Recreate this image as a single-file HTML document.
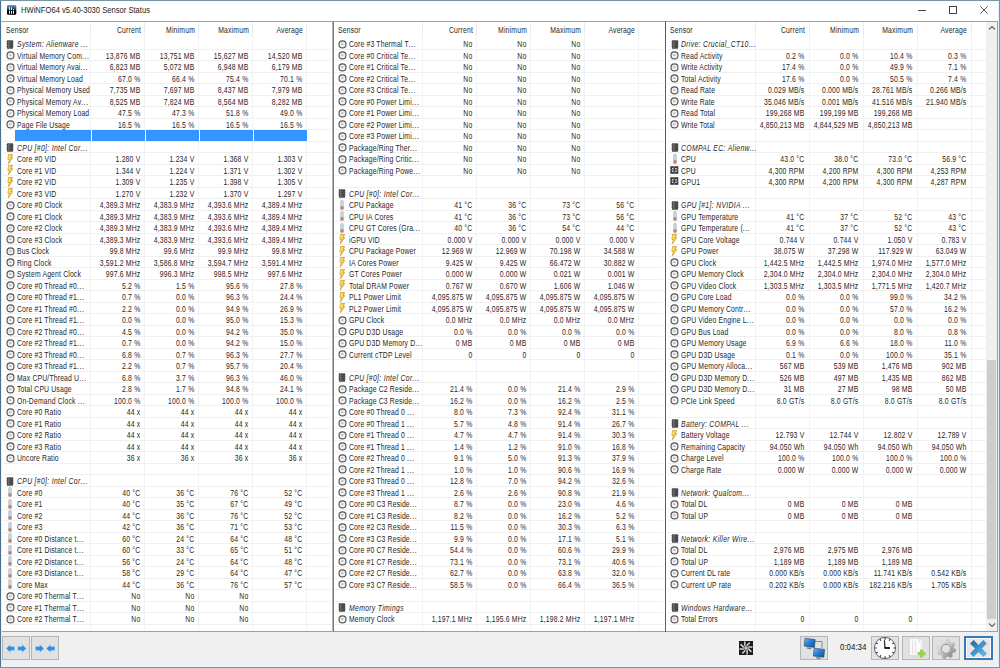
<!DOCTYPE html>
<html><head><meta charset="utf-8"><style>
*{margin:0;padding:0;box-sizing:border-box}
html,body{width:1000px;height:668px;overflow:hidden;background:#fff}
body{position:relative;font-family:"Liberation Sans",sans-serif}
.t{position:absolute;font-size:8.4px;letter-spacing:0.22px;line-height:9px;white-space:nowrap;color:#262626;transform:scaleX(0.815);transform-origin:0 0}
.r{display:flex;justify-content:flex-end;transform-origin:100% 0}
.nm{letter-spacing:0.2px}
.el{letter-spacing:0.75px}
.it{font-style:italic;letter-spacing:0.4px}
.ic{position:absolute;display:block}
.vg{position:absolute;top:37px;height:594px;width:1px;background:#f3f3f3}
.vh{position:absolute;top:22px;height:15px;width:1px;background:#ececec}
.hg{position:absolute;height:1px;background:#f0f0f0}
.sel{position:absolute;height:10.6px;background:#3396ff}
</style></head>
<body>
<div style="position:absolute;left:0;top:0;width:1000px;height:21px;background:#fff"></div>
<svg style="position:absolute;left:7px;top:5px" width="10" height="10" viewBox="0 0 10 10"><defs><linearGradient id="tg" x1="0" y1="0" x2="0" y2="1"><stop offset="0" stop-color="#6aa6c4"/><stop offset="0.5" stop-color="#0d3048"/><stop offset="0.62" stop-color="#000"/><stop offset="1" stop-color="#000"/></linearGradient></defs><rect x="-0.3" y="0.1" width="9.6" height="9.6" rx="1.3" fill="url(#tg)"/><rect x="2" y="2" width="1" height="3" fill="#c8f4ff"/><rect x="4" y="2.5" width="1" height="2.5" fill="#c8f4ff"/><rect x="6" y="4" width="1" height="1" fill="#b0ecff"/><rect x="2" y="5.8" width="1" height="2.8" fill="#fff"/><rect x="4" y="5.8" width="1" height="2.8" fill="#fff"/><rect x="6" y="5.8" width="1" height="2.8" fill="#fff"/></svg>
<div class="t" style="left:20.7px;top:5px;font-size:8.8px;letter-spacing:0;line-height:11px;color:#222;transform:scaleX(0.865);transform-origin:0 0">HWiNFO64 v5.40-3030 Sensor Status</div>
<div style="position:absolute;left:918px;top:10px;width:8px;height:1px;background:#444"></div>
<div style="position:absolute;left:949px;top:6px;width:7.5px;height:7.5px;border:1px solid #444"></div>
<svg style="position:absolute;left:980px;top:6px" width="8" height="8" viewBox="0 0 8 8"><path d="M0.3 0.3L7.7 7.7M7.7 0.3L0.3 7.7" stroke="#444" stroke-width="0.9"/></svg>
<div class="vg" style="left:90.30px"></div>
<div class="vh" style="left:90.30px"></div>
<div class="vg" style="left:144.30px"></div>
<div class="vh" style="left:144.30px"></div>
<div class="vg" style="left:198.30px"></div>
<div class="vh" style="left:198.30px"></div>
<div class="vg" style="left:252.30px"></div>
<div class="vh" style="left:252.30px"></div>
<div class="vg" style="left:306.30px"></div>
<div class="vh" style="left:306.30px"></div>
<div class="t hd" style="left:5.50px;top:26.2px">Sensor</div>
<div class="t hd r" style="left:90.80px;width:50.00px;top:26.2px">Current</div>
<div class="t hd r" style="left:144.80px;width:50.00px;top:26.2px">Minimum</div>
<div class="t hd r" style="left:198.80px;width:50.00px;top:26.2px">Maximum</div>
<div class="t hd r" style="left:252.80px;width:50.00px;top:26.2px">Average</div>
<div class="hg" style="left:3.00px;width:328px;top:49px"></div>
<svg class="ic" style="left:6.00px;top:39.50px" width="8" height="9" viewBox="0 0 8 9"><rect x="1" y="0.3" width="6" height="8.4" fill="#4a4a4a"/><rect x="2" y="0.3" width="1.5" height="8.4" fill="#6a6a6a"/><path d="M0.2 1.5h1M0.2 3.2h1M0.2 4.9h1M0.2 6.6h1M6.8 1.5h1M6.8 3.2h1M6.8 4.9h1M6.8 6.6h1" stroke="#777" stroke-width="0.7"/></svg>
<div class="t nm it" style="left:16.50px;top:40.30px">System: Alienware <span class="el">...</span></div>
<div class="hg" style="left:3.00px;width:328px;top:60px"></div>
<svg class="ic" style="left:5.60px;top:51.20px" width="9" height="9" viewBox="0 0 9 9"><circle cx="4.5" cy="4.4" r="3.5" fill="#f0f0f0" stroke="#555" stroke-width="1.15"/><path d="M3.2 4.1h2.2" stroke="#8a8a8a" stroke-width="0.9"/></svg>
<div class="t nm" style="left:16.50px;top:51.80px">Virtual Memory Com<span class="el">...</span></div>
<div class="t r" style="left:90.80px;width:49.40px;top:51.80px">13,876 MB</div>
<div class="t r" style="left:144.80px;width:49.40px;top:51.80px">13,751 MB</div>
<div class="t r" style="left:198.80px;width:49.40px;top:51.80px">15,627 MB</div>
<div class="t r" style="left:252.80px;width:49.40px;top:51.80px">14,520 MB</div>
<div class="hg" style="left:3.00px;width:328px;top:72px"></div>
<svg class="ic" style="left:5.60px;top:62.70px" width="9" height="9" viewBox="0 0 9 9"><circle cx="4.5" cy="4.4" r="3.5" fill="#f0f0f0" stroke="#555" stroke-width="1.15"/><path d="M3.2 4.1h2.2" stroke="#8a8a8a" stroke-width="0.9"/></svg>
<div class="t nm" style="left:16.50px;top:63.30px">Virtual Memory Avai<span class="el">...</span></div>
<div class="t r" style="left:90.80px;width:49.40px;top:63.30px">6,823 MB</div>
<div class="t r" style="left:144.80px;width:49.40px;top:63.30px">5,072 MB</div>
<div class="t r" style="left:198.80px;width:49.40px;top:63.30px">6,948 MB</div>
<div class="t r" style="left:252.80px;width:49.40px;top:63.30px">6,179 MB</div>
<div class="hg" style="left:3.00px;width:328px;top:83px"></div>
<svg class="ic" style="left:5.60px;top:74.20px" width="9" height="9" viewBox="0 0 9 9"><circle cx="4.5" cy="4.4" r="3.5" fill="#f0f0f0" stroke="#555" stroke-width="1.15"/><path d="M3.2 4.1h2.2" stroke="#8a8a8a" stroke-width="0.9"/></svg>
<div class="t nm" style="left:16.50px;top:74.80px">Virtual Memory Load</div>
<div class="t r" style="left:90.80px;width:49.40px;top:74.80px">67.0 %</div>
<div class="t r" style="left:144.80px;width:49.40px;top:74.80px">66.4 %</div>
<div class="t r" style="left:198.80px;width:49.40px;top:74.80px">75.4 %</div>
<div class="t r" style="left:252.80px;width:49.40px;top:74.80px">70.1 %</div>
<div class="hg" style="left:3.00px;width:328px;top:95px"></div>
<svg class="ic" style="left:5.60px;top:85.70px" width="9" height="9" viewBox="0 0 9 9"><circle cx="4.5" cy="4.4" r="3.5" fill="#f0f0f0" stroke="#555" stroke-width="1.15"/><path d="M3.2 4.1h2.2" stroke="#8a8a8a" stroke-width="0.9"/></svg>
<div class="t nm" style="left:16.50px;top:86.30px">Physical Memory Used</div>
<div class="t r" style="left:90.80px;width:49.40px;top:86.30px">7,735 MB</div>
<div class="t r" style="left:144.80px;width:49.40px;top:86.30px">7,697 MB</div>
<div class="t r" style="left:198.80px;width:49.40px;top:86.30px">8,437 MB</div>
<div class="t r" style="left:252.80px;width:49.40px;top:86.30px">7,979 MB</div>
<div class="hg" style="left:3.00px;width:328px;top:106px"></div>
<svg class="ic" style="left:5.60px;top:97.20px" width="9" height="9" viewBox="0 0 9 9"><circle cx="4.5" cy="4.4" r="3.5" fill="#f0f0f0" stroke="#555" stroke-width="1.15"/><path d="M3.2 4.1h2.2" stroke="#8a8a8a" stroke-width="0.9"/></svg>
<div class="t nm" style="left:16.50px;top:97.80px">Physical Memory Av<span class="el">...</span></div>
<div class="t r" style="left:90.80px;width:49.40px;top:97.80px">8,525 MB</div>
<div class="t r" style="left:144.80px;width:49.40px;top:97.80px">7,824 MB</div>
<div class="t r" style="left:198.80px;width:49.40px;top:97.80px">8,564 MB</div>
<div class="t r" style="left:252.80px;width:49.40px;top:97.80px">8,282 MB</div>
<div class="hg" style="left:3.00px;width:328px;top:118px"></div>
<svg class="ic" style="left:5.60px;top:108.70px" width="9" height="9" viewBox="0 0 9 9"><circle cx="4.5" cy="4.4" r="3.5" fill="#f0f0f0" stroke="#555" stroke-width="1.15"/><path d="M3.2 4.1h2.2" stroke="#8a8a8a" stroke-width="0.9"/></svg>
<div class="t nm" style="left:16.50px;top:109.30px">Physical Memory Load</div>
<div class="t r" style="left:90.80px;width:49.40px;top:109.30px">47.5 %</div>
<div class="t r" style="left:144.80px;width:49.40px;top:109.30px">47.3 %</div>
<div class="t r" style="left:198.80px;width:49.40px;top:109.30px">51.8 %</div>
<div class="t r" style="left:252.80px;width:49.40px;top:109.30px">49.0 %</div>
<div class="hg" style="left:3.00px;width:328px;top:129px"></div>
<svg class="ic" style="left:5.60px;top:120.20px" width="9" height="9" viewBox="0 0 9 9"><circle cx="4.5" cy="4.4" r="3.5" fill="#f0f0f0" stroke="#555" stroke-width="1.15"/><path d="M3.2 4.1h2.2" stroke="#8a8a8a" stroke-width="0.9"/></svg>
<div class="t nm" style="left:16.50px;top:120.80px">Page File Usage</div>
<div class="t r" style="left:90.80px;width:49.40px;top:120.80px">16.5 %</div>
<div class="t r" style="left:144.80px;width:49.40px;top:120.80px">16.5 %</div>
<div class="t r" style="left:198.80px;width:49.40px;top:120.80px">16.5 %</div>
<div class="t r" style="left:252.80px;width:49.40px;top:120.80px">16.5 %</div>
<div class="hg" style="left:3.00px;width:328px;top:141px"></div>
<div class="sel" style="left:15.40px;width:75.40px;top:130.20px"></div>
<div class="sel" style="left:91.80px;width:53.00px;top:130.20px"></div>
<div class="sel" style="left:145.80px;width:53.00px;top:130.20px"></div>
<div class="sel" style="left:199.80px;width:53.00px;top:130.20px"></div>
<div class="sel" style="left:253.80px;width:53.00px;top:130.20px"></div>
<div class="hg" style="left:3.00px;width:328px;top:152px"></div>
<svg class="ic" style="left:6.00px;top:143.00px" width="8" height="9" viewBox="0 0 8 9"><rect x="1" y="0.3" width="6" height="8.4" fill="#4a4a4a"/><rect x="2" y="0.3" width="1.5" height="8.4" fill="#6a6a6a"/><path d="M0.2 1.5h1M0.2 3.2h1M0.2 4.9h1M0.2 6.6h1M6.8 1.5h1M6.8 3.2h1M6.8 4.9h1M6.8 6.6h1" stroke="#777" stroke-width="0.7"/></svg>
<div class="t nm it" style="left:16.50px;top:143.80px">CPU [#0]: Intel Cor<span class="el">...</span></div>
<div class="hg" style="left:3.00px;width:328px;top:164px"></div>
<svg class="ic" style="left:6.50px;top:153.70px" width="7" height="10" viewBox="0 0 7 10"><path d="M1.6 0.4H5.6L4.1 3.6H5.7L1.4 9.7L2.5 5.3H0.9Z" fill="#f6d84a" stroke="#c98a1e" stroke-width="0.7" stroke-linejoin="round"/><path d="M2.3 1.2L1.8 4.6" stroke="#fff6b0" stroke-width="0.6"/></svg>
<div class="t nm" style="left:16.50px;top:155.30px">Core #0 VID</div>
<div class="t r" style="left:90.80px;width:49.40px;top:155.30px">1.280 V</div>
<div class="t r" style="left:144.80px;width:49.40px;top:155.30px">1.234 V</div>
<div class="t r" style="left:198.80px;width:49.40px;top:155.30px">1.368 V</div>
<div class="t r" style="left:252.80px;width:49.40px;top:155.30px">1.303 V</div>
<div class="hg" style="left:3.00px;width:328px;top:175px"></div>
<svg class="ic" style="left:6.50px;top:165.20px" width="7" height="10" viewBox="0 0 7 10"><path d="M1.6 0.4H5.6L4.1 3.6H5.7L1.4 9.7L2.5 5.3H0.9Z" fill="#f6d84a" stroke="#c98a1e" stroke-width="0.7" stroke-linejoin="round"/><path d="M2.3 1.2L1.8 4.6" stroke="#fff6b0" stroke-width="0.6"/></svg>
<div class="t nm" style="left:16.50px;top:166.80px">Core #1 VID</div>
<div class="t r" style="left:90.80px;width:49.40px;top:166.80px">1.344 V</div>
<div class="t r" style="left:144.80px;width:49.40px;top:166.80px">1.224 V</div>
<div class="t r" style="left:198.80px;width:49.40px;top:166.80px">1.371 V</div>
<div class="t r" style="left:252.80px;width:49.40px;top:166.80px">1.302 V</div>
<div class="hg" style="left:3.00px;width:328px;top:187px"></div>
<svg class="ic" style="left:6.50px;top:176.70px" width="7" height="10" viewBox="0 0 7 10"><path d="M1.6 0.4H5.6L4.1 3.6H5.7L1.4 9.7L2.5 5.3H0.9Z" fill="#f6d84a" stroke="#c98a1e" stroke-width="0.7" stroke-linejoin="round"/><path d="M2.3 1.2L1.8 4.6" stroke="#fff6b0" stroke-width="0.6"/></svg>
<div class="t nm" style="left:16.50px;top:178.30px">Core #2 VID</div>
<div class="t r" style="left:90.80px;width:49.40px;top:178.30px">1.309 V</div>
<div class="t r" style="left:144.80px;width:49.40px;top:178.30px">1.235 V</div>
<div class="t r" style="left:198.80px;width:49.40px;top:178.30px">1.398 V</div>
<div class="t r" style="left:252.80px;width:49.40px;top:178.30px">1.305 V</div>
<div class="hg" style="left:3.00px;width:328px;top:198px"></div>
<svg class="ic" style="left:6.50px;top:188.20px" width="7" height="10" viewBox="0 0 7 10"><path d="M1.6 0.4H5.6L4.1 3.6H5.7L1.4 9.7L2.5 5.3H0.9Z" fill="#f6d84a" stroke="#c98a1e" stroke-width="0.7" stroke-linejoin="round"/><path d="M2.3 1.2L1.8 4.6" stroke="#fff6b0" stroke-width="0.6"/></svg>
<div class="t nm" style="left:16.50px;top:189.80px">Core #3 VID</div>
<div class="t r" style="left:90.80px;width:49.40px;top:189.80px">1.270 V</div>
<div class="t r" style="left:144.80px;width:49.40px;top:189.80px">1.232 V</div>
<div class="t r" style="left:198.80px;width:49.40px;top:189.80px">1.370 V</div>
<div class="t r" style="left:252.80px;width:49.40px;top:189.80px">1.297 V</div>
<div class="hg" style="left:3.00px;width:328px;top:210px"></div>
<svg class="ic" style="left:5.60px;top:200.70px" width="9" height="9" viewBox="0 0 9 9"><circle cx="4.5" cy="4.4" r="3.5" fill="#f0f0f0" stroke="#555" stroke-width="1.15"/><path d="M3.2 4.1h2.2" stroke="#8a8a8a" stroke-width="0.9"/></svg>
<div class="t nm" style="left:16.50px;top:201.30px">Core #0 Clock</div>
<div class="t r" style="left:90.80px;width:49.40px;top:201.30px">4,389.3 MHz</div>
<div class="t r" style="left:144.80px;width:49.40px;top:201.30px">4,383.9 MHz</div>
<div class="t r" style="left:198.80px;width:49.40px;top:201.30px">4,393.6 MHz</div>
<div class="t r" style="left:252.80px;width:49.40px;top:201.30px">4,389.4 MHz</div>
<div class="hg" style="left:3.00px;width:328px;top:221px"></div>
<svg class="ic" style="left:5.60px;top:212.20px" width="9" height="9" viewBox="0 0 9 9"><circle cx="4.5" cy="4.4" r="3.5" fill="#f0f0f0" stroke="#555" stroke-width="1.15"/><path d="M3.2 4.1h2.2" stroke="#8a8a8a" stroke-width="0.9"/></svg>
<div class="t nm" style="left:16.50px;top:212.80px">Core #1 Clock</div>
<div class="t r" style="left:90.80px;width:49.40px;top:212.80px">4,389.3 MHz</div>
<div class="t r" style="left:144.80px;width:49.40px;top:212.80px">4,383.9 MHz</div>
<div class="t r" style="left:198.80px;width:49.40px;top:212.80px">4,393.6 MHz</div>
<div class="t r" style="left:252.80px;width:49.40px;top:212.80px">4,389.4 MHz</div>
<div class="hg" style="left:3.00px;width:328px;top:233px"></div>
<svg class="ic" style="left:5.60px;top:223.70px" width="9" height="9" viewBox="0 0 9 9"><circle cx="4.5" cy="4.4" r="3.5" fill="#f0f0f0" stroke="#555" stroke-width="1.15"/><path d="M3.2 4.1h2.2" stroke="#8a8a8a" stroke-width="0.9"/></svg>
<div class="t nm" style="left:16.50px;top:224.30px">Core #2 Clock</div>
<div class="t r" style="left:90.80px;width:49.40px;top:224.30px">4,389.3 MHz</div>
<div class="t r" style="left:144.80px;width:49.40px;top:224.30px">4,383.9 MHz</div>
<div class="t r" style="left:198.80px;width:49.40px;top:224.30px">4,393.6 MHz</div>
<div class="t r" style="left:252.80px;width:49.40px;top:224.30px">4,389.4 MHz</div>
<div class="hg" style="left:3.00px;width:328px;top:244px"></div>
<svg class="ic" style="left:5.60px;top:235.20px" width="9" height="9" viewBox="0 0 9 9"><circle cx="4.5" cy="4.4" r="3.5" fill="#f0f0f0" stroke="#555" stroke-width="1.15"/><path d="M3.2 4.1h2.2" stroke="#8a8a8a" stroke-width="0.9"/></svg>
<div class="t nm" style="left:16.50px;top:235.80px">Core #3 Clock</div>
<div class="t r" style="left:90.80px;width:49.40px;top:235.80px">4,389.3 MHz</div>
<div class="t r" style="left:144.80px;width:49.40px;top:235.80px">4,383.9 MHz</div>
<div class="t r" style="left:198.80px;width:49.40px;top:235.80px">4,393.6 MHz</div>
<div class="t r" style="left:252.80px;width:49.40px;top:235.80px">4,389.4 MHz</div>
<div class="hg" style="left:3.00px;width:328px;top:256px"></div>
<svg class="ic" style="left:5.60px;top:246.70px" width="9" height="9" viewBox="0 0 9 9"><circle cx="4.5" cy="4.4" r="3.5" fill="#f0f0f0" stroke="#555" stroke-width="1.15"/><path d="M3.2 4.1h2.2" stroke="#8a8a8a" stroke-width="0.9"/></svg>
<div class="t nm" style="left:16.50px;top:247.30px">Bus Clock</div>
<div class="t r" style="left:90.80px;width:49.40px;top:247.30px">99.8 MHz</div>
<div class="t r" style="left:144.80px;width:49.40px;top:247.30px">99.6 MHz</div>
<div class="t r" style="left:198.80px;width:49.40px;top:247.30px">99.9 MHz</div>
<div class="t r" style="left:252.80px;width:49.40px;top:247.30px">99.8 MHz</div>
<div class="hg" style="left:3.00px;width:328px;top:267px"></div>
<svg class="ic" style="left:5.60px;top:258.20px" width="9" height="9" viewBox="0 0 9 9"><circle cx="4.5" cy="4.4" r="3.5" fill="#f0f0f0" stroke="#555" stroke-width="1.15"/><path d="M3.2 4.1h2.2" stroke="#8a8a8a" stroke-width="0.9"/></svg>
<div class="t nm" style="left:16.50px;top:258.80px">Ring Clock</div>
<div class="t r" style="left:90.80px;width:49.40px;top:258.80px">3,591.2 MHz</div>
<div class="t r" style="left:144.80px;width:49.40px;top:258.80px">3,586.8 MHz</div>
<div class="t r" style="left:198.80px;width:49.40px;top:258.80px">3,594.7 MHz</div>
<div class="t r" style="left:252.80px;width:49.40px;top:258.80px">3,591.4 MHz</div>
<div class="hg" style="left:3.00px;width:328px;top:279px"></div>
<svg class="ic" style="left:5.60px;top:269.70px" width="9" height="9" viewBox="0 0 9 9"><circle cx="4.5" cy="4.4" r="3.5" fill="#f0f0f0" stroke="#555" stroke-width="1.15"/><path d="M3.2 4.1h2.2" stroke="#8a8a8a" stroke-width="0.9"/></svg>
<div class="t nm" style="left:16.50px;top:270.30px">System Agent Clock</div>
<div class="t r" style="left:90.80px;width:49.40px;top:270.30px">997.6 MHz</div>
<div class="t r" style="left:144.80px;width:49.40px;top:270.30px">996.3 MHz</div>
<div class="t r" style="left:198.80px;width:49.40px;top:270.30px">998.5 MHz</div>
<div class="t r" style="left:252.80px;width:49.40px;top:270.30px">997.6 MHz</div>
<div class="hg" style="left:3.00px;width:328px;top:290px"></div>
<svg class="ic" style="left:5.60px;top:281.20px" width="9" height="9" viewBox="0 0 9 9"><circle cx="4.5" cy="4.4" r="3.5" fill="#f0f0f0" stroke="#555" stroke-width="1.15"/><path d="M3.2 4.1h2.2" stroke="#8a8a8a" stroke-width="0.9"/></svg>
<div class="t nm" style="left:16.50px;top:281.80px">Core #0 Thread #0<span class="el">...</span></div>
<div class="t r" style="left:90.80px;width:49.40px;top:281.80px">5.2 %</div>
<div class="t r" style="left:144.80px;width:49.40px;top:281.80px">1.5 %</div>
<div class="t r" style="left:198.80px;width:49.40px;top:281.80px">95.6 %</div>
<div class="t r" style="left:252.80px;width:49.40px;top:281.80px">27.8 %</div>
<div class="hg" style="left:3.00px;width:328px;top:302px"></div>
<svg class="ic" style="left:5.60px;top:292.70px" width="9" height="9" viewBox="0 0 9 9"><circle cx="4.5" cy="4.4" r="3.5" fill="#f0f0f0" stroke="#555" stroke-width="1.15"/><path d="M3.2 4.1h2.2" stroke="#8a8a8a" stroke-width="0.9"/></svg>
<div class="t nm" style="left:16.50px;top:293.30px">Core #0 Thread #1<span class="el">...</span></div>
<div class="t r" style="left:90.80px;width:49.40px;top:293.30px">0.7 %</div>
<div class="t r" style="left:144.80px;width:49.40px;top:293.30px">0.0 %</div>
<div class="t r" style="left:198.80px;width:49.40px;top:293.30px">96.3 %</div>
<div class="t r" style="left:252.80px;width:49.40px;top:293.30px">24.4 %</div>
<div class="hg" style="left:3.00px;width:328px;top:313px"></div>
<svg class="ic" style="left:5.60px;top:304.20px" width="9" height="9" viewBox="0 0 9 9"><circle cx="4.5" cy="4.4" r="3.5" fill="#f0f0f0" stroke="#555" stroke-width="1.15"/><path d="M3.2 4.1h2.2" stroke="#8a8a8a" stroke-width="0.9"/></svg>
<div class="t nm" style="left:16.50px;top:304.80px">Core #1 Thread #0<span class="el">...</span></div>
<div class="t r" style="left:90.80px;width:49.40px;top:304.80px">2.2 %</div>
<div class="t r" style="left:144.80px;width:49.40px;top:304.80px">0.0 %</div>
<div class="t r" style="left:198.80px;width:49.40px;top:304.80px">94.9 %</div>
<div class="t r" style="left:252.80px;width:49.40px;top:304.80px">26.9 %</div>
<div class="hg" style="left:3.00px;width:328px;top:325px"></div>
<svg class="ic" style="left:5.60px;top:315.70px" width="9" height="9" viewBox="0 0 9 9"><circle cx="4.5" cy="4.4" r="3.5" fill="#f0f0f0" stroke="#555" stroke-width="1.15"/><path d="M3.2 4.1h2.2" stroke="#8a8a8a" stroke-width="0.9"/></svg>
<div class="t nm" style="left:16.50px;top:316.30px">Core #1 Thread #1<span class="el">...</span></div>
<div class="t r" style="left:90.80px;width:49.40px;top:316.30px">0.0 %</div>
<div class="t r" style="left:144.80px;width:49.40px;top:316.30px">0.0 %</div>
<div class="t r" style="left:198.80px;width:49.40px;top:316.30px">95.0 %</div>
<div class="t r" style="left:252.80px;width:49.40px;top:316.30px">15.3 %</div>
<div class="hg" style="left:3.00px;width:328px;top:336px"></div>
<svg class="ic" style="left:5.60px;top:327.20px" width="9" height="9" viewBox="0 0 9 9"><circle cx="4.5" cy="4.4" r="3.5" fill="#f0f0f0" stroke="#555" stroke-width="1.15"/><path d="M3.2 4.1h2.2" stroke="#8a8a8a" stroke-width="0.9"/></svg>
<div class="t nm" style="left:16.50px;top:327.80px">Core #2 Thread #0<span class="el">...</span></div>
<div class="t r" style="left:90.80px;width:49.40px;top:327.80px">4.5 %</div>
<div class="t r" style="left:144.80px;width:49.40px;top:327.80px">0.0 %</div>
<div class="t r" style="left:198.80px;width:49.40px;top:327.80px">94.2 %</div>
<div class="t r" style="left:252.80px;width:49.40px;top:327.80px">35.0 %</div>
<div class="hg" style="left:3.00px;width:328px;top:348px"></div>
<svg class="ic" style="left:5.60px;top:338.70px" width="9" height="9" viewBox="0 0 9 9"><circle cx="4.5" cy="4.4" r="3.5" fill="#f0f0f0" stroke="#555" stroke-width="1.15"/><path d="M3.2 4.1h2.2" stroke="#8a8a8a" stroke-width="0.9"/></svg>
<div class="t nm" style="left:16.50px;top:339.30px">Core #2 Thread #1<span class="el">...</span></div>
<div class="t r" style="left:90.80px;width:49.40px;top:339.30px">0.7 %</div>
<div class="t r" style="left:144.80px;width:49.40px;top:339.30px">0.0 %</div>
<div class="t r" style="left:198.80px;width:49.40px;top:339.30px">94.2 %</div>
<div class="t r" style="left:252.80px;width:49.40px;top:339.30px">15.0 %</div>
<div class="hg" style="left:3.00px;width:328px;top:359px"></div>
<svg class="ic" style="left:5.60px;top:350.20px" width="9" height="9" viewBox="0 0 9 9"><circle cx="4.5" cy="4.4" r="3.5" fill="#f0f0f0" stroke="#555" stroke-width="1.15"/><path d="M3.2 4.1h2.2" stroke="#8a8a8a" stroke-width="0.9"/></svg>
<div class="t nm" style="left:16.50px;top:350.80px">Core #3 Thread #0<span class="el">...</span></div>
<div class="t r" style="left:90.80px;width:49.40px;top:350.80px">6.8 %</div>
<div class="t r" style="left:144.80px;width:49.40px;top:350.80px">0.7 %</div>
<div class="t r" style="left:198.80px;width:49.40px;top:350.80px">96.3 %</div>
<div class="t r" style="left:252.80px;width:49.40px;top:350.80px">27.7 %</div>
<div class="hg" style="left:3.00px;width:328px;top:371px"></div>
<svg class="ic" style="left:5.60px;top:361.70px" width="9" height="9" viewBox="0 0 9 9"><circle cx="4.5" cy="4.4" r="3.5" fill="#f0f0f0" stroke="#555" stroke-width="1.15"/><path d="M3.2 4.1h2.2" stroke="#8a8a8a" stroke-width="0.9"/></svg>
<div class="t nm" style="left:16.50px;top:362.30px">Core #3 Thread #1<span class="el">...</span></div>
<div class="t r" style="left:90.80px;width:49.40px;top:362.30px">2.2 %</div>
<div class="t r" style="left:144.80px;width:49.40px;top:362.30px">0.7 %</div>
<div class="t r" style="left:198.80px;width:49.40px;top:362.30px">95.7 %</div>
<div class="t r" style="left:252.80px;width:49.40px;top:362.30px">20.4 %</div>
<div class="hg" style="left:3.00px;width:328px;top:382px"></div>
<svg class="ic" style="left:5.60px;top:373.20px" width="9" height="9" viewBox="0 0 9 9"><circle cx="4.5" cy="4.4" r="3.5" fill="#f0f0f0" stroke="#555" stroke-width="1.15"/><path d="M3.2 4.1h2.2" stroke="#8a8a8a" stroke-width="0.9"/></svg>
<div class="t nm" style="left:16.50px;top:373.80px">Max CPU/Thread U<span class="el">...</span></div>
<div class="t r" style="left:90.80px;width:49.40px;top:373.80px">6.8 %</div>
<div class="t r" style="left:144.80px;width:49.40px;top:373.80px">3.7 %</div>
<div class="t r" style="left:198.80px;width:49.40px;top:373.80px">96.3 %</div>
<div class="t r" style="left:252.80px;width:49.40px;top:373.80px">46.0 %</div>
<div class="hg" style="left:3.00px;width:328px;top:394px"></div>
<svg class="ic" style="left:5.60px;top:384.70px" width="9" height="9" viewBox="0 0 9 9"><circle cx="4.5" cy="4.4" r="3.5" fill="#f0f0f0" stroke="#555" stroke-width="1.15"/><path d="M3.2 4.1h2.2" stroke="#8a8a8a" stroke-width="0.9"/></svg>
<div class="t nm" style="left:16.50px;top:385.30px">Total CPU Usage</div>
<div class="t r" style="left:90.80px;width:49.40px;top:385.30px">2.8 %</div>
<div class="t r" style="left:144.80px;width:49.40px;top:385.30px">1.7 %</div>
<div class="t r" style="left:198.80px;width:49.40px;top:385.30px">94.8 %</div>
<div class="t r" style="left:252.80px;width:49.40px;top:385.30px">24.1 %</div>
<div class="hg" style="left:3.00px;width:328px;top:405px"></div>
<svg class="ic" style="left:5.60px;top:396.20px" width="9" height="9" viewBox="0 0 9 9"><circle cx="4.5" cy="4.4" r="3.5" fill="#f0f0f0" stroke="#555" stroke-width="1.15"/><path d="M3.2 4.1h2.2" stroke="#8a8a8a" stroke-width="0.9"/></svg>
<div class="t nm" style="left:16.50px;top:396.80px">On-Demand Clock <span class="el">...</span></div>
<div class="t r" style="left:90.80px;width:49.40px;top:396.80px">100.0 %</div>
<div class="t r" style="left:144.80px;width:49.40px;top:396.80px">100.0 %</div>
<div class="t r" style="left:198.80px;width:49.40px;top:396.80px">100.0 %</div>
<div class="t r" style="left:252.80px;width:49.40px;top:396.80px">100.0 %</div>
<div class="hg" style="left:3.00px;width:328px;top:417px"></div>
<svg class="ic" style="left:5.60px;top:407.70px" width="9" height="9" viewBox="0 0 9 9"><circle cx="4.5" cy="4.4" r="3.5" fill="#f0f0f0" stroke="#555" stroke-width="1.15"/><path d="M3.2 4.1h2.2" stroke="#8a8a8a" stroke-width="0.9"/></svg>
<div class="t nm" style="left:16.50px;top:408.30px">Core #0 Ratio</div>
<div class="t r" style="left:90.80px;width:49.40px;top:408.30px">44 x</div>
<div class="t r" style="left:144.80px;width:49.40px;top:408.30px">44 x</div>
<div class="t r" style="left:198.80px;width:49.40px;top:408.30px">44 x</div>
<div class="t r" style="left:252.80px;width:49.40px;top:408.30px">44 x</div>
<div class="hg" style="left:3.00px;width:328px;top:428px"></div>
<svg class="ic" style="left:5.60px;top:419.20px" width="9" height="9" viewBox="0 0 9 9"><circle cx="4.5" cy="4.4" r="3.5" fill="#f0f0f0" stroke="#555" stroke-width="1.15"/><path d="M3.2 4.1h2.2" stroke="#8a8a8a" stroke-width="0.9"/></svg>
<div class="t nm" style="left:16.50px;top:419.80px">Core #1 Ratio</div>
<div class="t r" style="left:90.80px;width:49.40px;top:419.80px">44 x</div>
<div class="t r" style="left:144.80px;width:49.40px;top:419.80px">44 x</div>
<div class="t r" style="left:198.80px;width:49.40px;top:419.80px">44 x</div>
<div class="t r" style="left:252.80px;width:49.40px;top:419.80px">44 x</div>
<div class="hg" style="left:3.00px;width:328px;top:440px"></div>
<svg class="ic" style="left:5.60px;top:430.70px" width="9" height="9" viewBox="0 0 9 9"><circle cx="4.5" cy="4.4" r="3.5" fill="#f0f0f0" stroke="#555" stroke-width="1.15"/><path d="M3.2 4.1h2.2" stroke="#8a8a8a" stroke-width="0.9"/></svg>
<div class="t nm" style="left:16.50px;top:431.30px">Core #2 Ratio</div>
<div class="t r" style="left:90.80px;width:49.40px;top:431.30px">44 x</div>
<div class="t r" style="left:144.80px;width:49.40px;top:431.30px">44 x</div>
<div class="t r" style="left:198.80px;width:49.40px;top:431.30px">44 x</div>
<div class="t r" style="left:252.80px;width:49.40px;top:431.30px">44 x</div>
<div class="hg" style="left:3.00px;width:328px;top:451px"></div>
<svg class="ic" style="left:5.60px;top:442.20px" width="9" height="9" viewBox="0 0 9 9"><circle cx="4.5" cy="4.4" r="3.5" fill="#f0f0f0" stroke="#555" stroke-width="1.15"/><path d="M3.2 4.1h2.2" stroke="#8a8a8a" stroke-width="0.9"/></svg>
<div class="t nm" style="left:16.50px;top:442.80px">Core #3 Ratio</div>
<div class="t r" style="left:90.80px;width:49.40px;top:442.80px">44 x</div>
<div class="t r" style="left:144.80px;width:49.40px;top:442.80px">44 x</div>
<div class="t r" style="left:198.80px;width:49.40px;top:442.80px">44 x</div>
<div class="t r" style="left:252.80px;width:49.40px;top:442.80px">44 x</div>
<div class="hg" style="left:3.00px;width:328px;top:463px"></div>
<svg class="ic" style="left:5.60px;top:453.70px" width="9" height="9" viewBox="0 0 9 9"><circle cx="4.5" cy="4.4" r="3.5" fill="#f0f0f0" stroke="#555" stroke-width="1.15"/><path d="M3.2 4.1h2.2" stroke="#8a8a8a" stroke-width="0.9"/></svg>
<div class="t nm" style="left:16.50px;top:454.30px">Uncore Ratio</div>
<div class="t r" style="left:90.80px;width:49.40px;top:454.30px">36 x</div>
<div class="t r" style="left:144.80px;width:49.40px;top:454.30px">36 x</div>
<div class="t r" style="left:198.80px;width:49.40px;top:454.30px">36 x</div>
<div class="t r" style="left:252.80px;width:49.40px;top:454.30px">36 x</div>
<div class="hg" style="left:3.00px;width:328px;top:474px"></div>
<div class="hg" style="left:3.00px;width:328px;top:486px"></div>
<svg class="ic" style="left:6.00px;top:476.50px" width="8" height="9" viewBox="0 0 8 9"><rect x="1" y="0.3" width="6" height="8.4" fill="#4a4a4a"/><rect x="2" y="0.3" width="1.5" height="8.4" fill="#6a6a6a"/><path d="M0.2 1.5h1M0.2 3.2h1M0.2 4.9h1M0.2 6.6h1M6.8 1.5h1M6.8 3.2h1M6.8 4.9h1M6.8 6.6h1" stroke="#777" stroke-width="0.7"/></svg>
<div class="t nm it" style="left:16.50px;top:477.30px">CPU [#0]: Intel Cor<span class="el">...</span></div>
<div class="hg" style="left:3.00px;width:328px;top:497px"></div>
<svg class="ic" style="left:7.00px;top:487.40px" width="6" height="10" viewBox="0 0 6 10"><rect x="1.7" y="0.3" width="2.6" height="7" rx="1.2" fill="#d4dbe2" stroke="#a4adb6" stroke-width="0.6"/><rect x="2.5" y="0.8" width="1" height="2.5" fill="#a8d4f0"/><circle cx="3" cy="7.9" r="1.8" fill="#cfb0a0" stroke="#a68878" stroke-width="0.5"/><circle cx="3" cy="7.9" r="0.8" fill="#b0503a"/></svg>
<div class="t nm" style="left:16.50px;top:488.80px">Core #0</div>
<div class="t r" style="left:90.80px;width:49.40px;top:488.80px">40 °C</div>
<div class="t r" style="left:144.80px;width:49.40px;top:488.80px">36 °C</div>
<div class="t r" style="left:198.80px;width:49.40px;top:488.80px">76 °C</div>
<div class="t r" style="left:252.80px;width:49.40px;top:488.80px">52 °C</div>
<div class="hg" style="left:3.00px;width:328px;top:509px"></div>
<svg class="ic" style="left:7.00px;top:498.90px" width="6" height="10" viewBox="0 0 6 10"><rect x="1.7" y="0.3" width="2.6" height="7" rx="1.2" fill="#d4dbe2" stroke="#a4adb6" stroke-width="0.6"/><rect x="2.5" y="0.8" width="1" height="2.5" fill="#a8d4f0"/><circle cx="3" cy="7.9" r="1.8" fill="#cfb0a0" stroke="#a68878" stroke-width="0.5"/><circle cx="3" cy="7.9" r="0.8" fill="#b0503a"/></svg>
<div class="t nm" style="left:16.50px;top:500.30px">Core #1</div>
<div class="t r" style="left:90.80px;width:49.40px;top:500.30px">40 °C</div>
<div class="t r" style="left:144.80px;width:49.40px;top:500.30px">35 °C</div>
<div class="t r" style="left:198.80px;width:49.40px;top:500.30px">67 °C</div>
<div class="t r" style="left:252.80px;width:49.40px;top:500.30px">49 °C</div>
<div class="hg" style="left:3.00px;width:328px;top:520px"></div>
<svg class="ic" style="left:7.00px;top:510.40px" width="6" height="10" viewBox="0 0 6 10"><rect x="1.7" y="0.3" width="2.6" height="7" rx="1.2" fill="#d4dbe2" stroke="#a4adb6" stroke-width="0.6"/><rect x="2.5" y="0.8" width="1" height="2.5" fill="#a8d4f0"/><circle cx="3" cy="7.9" r="1.8" fill="#cfb0a0" stroke="#a68878" stroke-width="0.5"/><circle cx="3" cy="7.9" r="0.8" fill="#b0503a"/></svg>
<div class="t nm" style="left:16.50px;top:511.80px">Core #2</div>
<div class="t r" style="left:90.80px;width:49.40px;top:511.80px">44 °C</div>
<div class="t r" style="left:144.80px;width:49.40px;top:511.80px">36 °C</div>
<div class="t r" style="left:198.80px;width:49.40px;top:511.80px">76 °C</div>
<div class="t r" style="left:252.80px;width:49.40px;top:511.80px">52 °C</div>
<div class="hg" style="left:3.00px;width:328px;top:532px"></div>
<svg class="ic" style="left:7.00px;top:521.90px" width="6" height="10" viewBox="0 0 6 10"><rect x="1.7" y="0.3" width="2.6" height="7" rx="1.2" fill="#d4dbe2" stroke="#a4adb6" stroke-width="0.6"/><rect x="2.5" y="0.8" width="1" height="2.5" fill="#a8d4f0"/><circle cx="3" cy="7.9" r="1.8" fill="#cfb0a0" stroke="#a68878" stroke-width="0.5"/><circle cx="3" cy="7.9" r="0.8" fill="#b0503a"/></svg>
<div class="t nm" style="left:16.50px;top:523.30px">Core #3</div>
<div class="t r" style="left:90.80px;width:49.40px;top:523.30px">42 °C</div>
<div class="t r" style="left:144.80px;width:49.40px;top:523.30px">36 °C</div>
<div class="t r" style="left:198.80px;width:49.40px;top:523.30px">71 °C</div>
<div class="t r" style="left:252.80px;width:49.40px;top:523.30px">53 °C</div>
<div class="hg" style="left:3.00px;width:328px;top:543px"></div>
<svg class="ic" style="left:7.00px;top:533.40px" width="6" height="10" viewBox="0 0 6 10"><rect x="1.7" y="0.3" width="2.6" height="7" rx="1.2" fill="#d4dbe2" stroke="#a4adb6" stroke-width="0.6"/><rect x="2.5" y="0.8" width="1" height="2.5" fill="#a8d4f0"/><circle cx="3" cy="7.9" r="1.8" fill="#cfb0a0" stroke="#a68878" stroke-width="0.5"/><circle cx="3" cy="7.9" r="0.8" fill="#b0503a"/></svg>
<div class="t nm" style="left:16.50px;top:534.80px">Core #0 Distance t<span class="el">...</span></div>
<div class="t r" style="left:90.80px;width:49.40px;top:534.80px">60 °C</div>
<div class="t r" style="left:144.80px;width:49.40px;top:534.80px">24 °C</div>
<div class="t r" style="left:198.80px;width:49.40px;top:534.80px">64 °C</div>
<div class="t r" style="left:252.80px;width:49.40px;top:534.80px">48 °C</div>
<div class="hg" style="left:3.00px;width:328px;top:555px"></div>
<svg class="ic" style="left:7.00px;top:544.90px" width="6" height="10" viewBox="0 0 6 10"><rect x="1.7" y="0.3" width="2.6" height="7" rx="1.2" fill="#d4dbe2" stroke="#a4adb6" stroke-width="0.6"/><rect x="2.5" y="0.8" width="1" height="2.5" fill="#a8d4f0"/><circle cx="3" cy="7.9" r="1.8" fill="#cfb0a0" stroke="#a68878" stroke-width="0.5"/><circle cx="3" cy="7.9" r="0.8" fill="#b0503a"/></svg>
<div class="t nm" style="left:16.50px;top:546.30px">Core #1 Distance t<span class="el">...</span></div>
<div class="t r" style="left:90.80px;width:49.40px;top:546.30px">60 °C</div>
<div class="t r" style="left:144.80px;width:49.40px;top:546.30px">33 °C</div>
<div class="t r" style="left:198.80px;width:49.40px;top:546.30px">65 °C</div>
<div class="t r" style="left:252.80px;width:49.40px;top:546.30px">51 °C</div>
<div class="hg" style="left:3.00px;width:328px;top:566px"></div>
<svg class="ic" style="left:7.00px;top:556.40px" width="6" height="10" viewBox="0 0 6 10"><rect x="1.7" y="0.3" width="2.6" height="7" rx="1.2" fill="#d4dbe2" stroke="#a4adb6" stroke-width="0.6"/><rect x="2.5" y="0.8" width="1" height="2.5" fill="#a8d4f0"/><circle cx="3" cy="7.9" r="1.8" fill="#cfb0a0" stroke="#a68878" stroke-width="0.5"/><circle cx="3" cy="7.9" r="0.8" fill="#b0503a"/></svg>
<div class="t nm" style="left:16.50px;top:557.80px">Core #2 Distance t<span class="el">...</span></div>
<div class="t r" style="left:90.80px;width:49.40px;top:557.80px">56 °C</div>
<div class="t r" style="left:144.80px;width:49.40px;top:557.80px">24 °C</div>
<div class="t r" style="left:198.80px;width:49.40px;top:557.80px">64 °C</div>
<div class="t r" style="left:252.80px;width:49.40px;top:557.80px">48 °C</div>
<div class="hg" style="left:3.00px;width:328px;top:578px"></div>
<svg class="ic" style="left:7.00px;top:567.90px" width="6" height="10" viewBox="0 0 6 10"><rect x="1.7" y="0.3" width="2.6" height="7" rx="1.2" fill="#d4dbe2" stroke="#a4adb6" stroke-width="0.6"/><rect x="2.5" y="0.8" width="1" height="2.5" fill="#a8d4f0"/><circle cx="3" cy="7.9" r="1.8" fill="#cfb0a0" stroke="#a68878" stroke-width="0.5"/><circle cx="3" cy="7.9" r="0.8" fill="#b0503a"/></svg>
<div class="t nm" style="left:16.50px;top:569.30px">Core #3 Distance t<span class="el">...</span></div>
<div class="t r" style="left:90.80px;width:49.40px;top:569.30px">58 °C</div>
<div class="t r" style="left:144.80px;width:49.40px;top:569.30px">29 °C</div>
<div class="t r" style="left:198.80px;width:49.40px;top:569.30px">64 °C</div>
<div class="t r" style="left:252.80px;width:49.40px;top:569.30px">47 °C</div>
<div class="hg" style="left:3.00px;width:328px;top:589px"></div>
<svg class="ic" style="left:7.00px;top:579.40px" width="6" height="10" viewBox="0 0 6 10"><rect x="1.7" y="0.3" width="2.6" height="7" rx="1.2" fill="#d4dbe2" stroke="#a4adb6" stroke-width="0.6"/><rect x="2.5" y="0.8" width="1" height="2.5" fill="#a8d4f0"/><circle cx="3" cy="7.9" r="1.8" fill="#cfb0a0" stroke="#a68878" stroke-width="0.5"/><circle cx="3" cy="7.9" r="0.8" fill="#b0503a"/></svg>
<div class="t nm" style="left:16.50px;top:580.80px">Core Max</div>
<div class="t r" style="left:90.80px;width:49.40px;top:580.80px">44 °C</div>
<div class="t r" style="left:144.80px;width:49.40px;top:580.80px">36 °C</div>
<div class="t r" style="left:198.80px;width:49.40px;top:580.80px">76 °C</div>
<div class="t r" style="left:252.80px;width:49.40px;top:580.80px">57 °C</div>
<div class="hg" style="left:3.00px;width:328px;top:601px"></div>
<svg class="ic" style="left:5.60px;top:591.70px" width="9" height="9" viewBox="0 0 9 9"><circle cx="4.5" cy="4.4" r="3.5" fill="#f0f0f0" stroke="#555" stroke-width="1.15"/><path d="M3.2 4.1h2.2" stroke="#8a8a8a" stroke-width="0.9"/></svg>
<div class="t nm" style="left:16.50px;top:592.30px">Core #0 Thermal T<span class="el">...</span></div>
<div class="t r" style="left:90.80px;width:49.40px;top:592.30px">No</div>
<div class="t r" style="left:144.80px;width:49.40px;top:592.30px">No</div>
<div class="t r" style="left:198.80px;width:49.40px;top:592.30px">No</div>
<div class="hg" style="left:3.00px;width:328px;top:612px"></div>
<svg class="ic" style="left:5.60px;top:603.20px" width="9" height="9" viewBox="0 0 9 9"><circle cx="4.5" cy="4.4" r="3.5" fill="#f0f0f0" stroke="#555" stroke-width="1.15"/><path d="M3.2 4.1h2.2" stroke="#8a8a8a" stroke-width="0.9"/></svg>
<div class="t nm" style="left:16.50px;top:603.80px">Core #1 Thermal T<span class="el">...</span></div>
<div class="t r" style="left:90.80px;width:49.40px;top:603.80px">No</div>
<div class="t r" style="left:144.80px;width:49.40px;top:603.80px">No</div>
<div class="t r" style="left:198.80px;width:49.40px;top:603.80px">No</div>
<div class="hg" style="left:3.00px;width:328px;top:624px"></div>
<svg class="ic" style="left:5.60px;top:614.70px" width="9" height="9" viewBox="0 0 9 9"><circle cx="4.5" cy="4.4" r="3.5" fill="#f0f0f0" stroke="#555" stroke-width="1.15"/><path d="M3.2 4.1h2.2" stroke="#8a8a8a" stroke-width="0.9"/></svg>
<div class="t nm" style="left:16.50px;top:615.30px">Core #2 Thermal T<span class="el">...</span></div>
<div class="t r" style="left:90.80px;width:49.40px;top:615.30px">No</div>
<div class="t r" style="left:144.80px;width:49.40px;top:615.30px">No</div>
<div class="t r" style="left:198.80px;width:49.40px;top:615.30px">No</div>
<div class="hg" style="left:3.00px;width:328px;top:635px"></div>
<div class="vg" style="left:422.30px"></div>
<div class="vh" style="left:422.30px"></div>
<div class="vg" style="left:476.30px"></div>
<div class="vh" style="left:476.30px"></div>
<div class="vg" style="left:530.30px"></div>
<div class="vh" style="left:530.30px"></div>
<div class="vg" style="left:584.30px"></div>
<div class="vh" style="left:584.30px"></div>
<div class="vg" style="left:638.30px"></div>
<div class="vh" style="left:638.30px"></div>
<div class="t hd" style="left:337.50px;top:26.2px">Sensor</div>
<div class="t hd r" style="left:422.80px;width:50.00px;top:26.2px">Current</div>
<div class="t hd r" style="left:476.80px;width:50.00px;top:26.2px">Minimum</div>
<div class="t hd r" style="left:530.80px;width:50.00px;top:26.2px">Maximum</div>
<div class="t hd r" style="left:584.80px;width:50.00px;top:26.2px">Average</div>
<div class="hg" style="left:335.00px;width:328px;top:49px"></div>
<svg class="ic" style="left:337.60px;top:39.70px" width="9" height="9" viewBox="0 0 9 9"><circle cx="4.5" cy="4.4" r="3.5" fill="#f0f0f0" stroke="#555" stroke-width="1.15"/><path d="M3.2 4.1h2.2" stroke="#8a8a8a" stroke-width="0.9"/></svg>
<div class="t nm" style="left:348.50px;top:40.30px">Core #3 Thermal T<span class="el">...</span></div>
<div class="t r" style="left:422.80px;width:49.40px;top:40.30px">No</div>
<div class="t r" style="left:476.80px;width:49.40px;top:40.30px">No</div>
<div class="t r" style="left:530.80px;width:49.40px;top:40.30px">No</div>
<div class="hg" style="left:335.00px;width:328px;top:60px"></div>
<svg class="ic" style="left:337.60px;top:51.20px" width="9" height="9" viewBox="0 0 9 9"><circle cx="4.5" cy="4.4" r="3.5" fill="#f0f0f0" stroke="#555" stroke-width="1.15"/><path d="M3.2 4.1h2.2" stroke="#8a8a8a" stroke-width="0.9"/></svg>
<div class="t nm" style="left:348.50px;top:51.80px">Core #0 Critical Te<span class="el">...</span></div>
<div class="t r" style="left:422.80px;width:49.40px;top:51.80px">No</div>
<div class="t r" style="left:476.80px;width:49.40px;top:51.80px">No</div>
<div class="t r" style="left:530.80px;width:49.40px;top:51.80px">No</div>
<div class="hg" style="left:335.00px;width:328px;top:72px"></div>
<svg class="ic" style="left:337.60px;top:62.70px" width="9" height="9" viewBox="0 0 9 9"><circle cx="4.5" cy="4.4" r="3.5" fill="#f0f0f0" stroke="#555" stroke-width="1.15"/><path d="M3.2 4.1h2.2" stroke="#8a8a8a" stroke-width="0.9"/></svg>
<div class="t nm" style="left:348.50px;top:63.30px">Core #1 Critical Te<span class="el">...</span></div>
<div class="t r" style="left:422.80px;width:49.40px;top:63.30px">No</div>
<div class="t r" style="left:476.80px;width:49.40px;top:63.30px">No</div>
<div class="t r" style="left:530.80px;width:49.40px;top:63.30px">No</div>
<div class="hg" style="left:335.00px;width:328px;top:83px"></div>
<svg class="ic" style="left:337.60px;top:74.20px" width="9" height="9" viewBox="0 0 9 9"><circle cx="4.5" cy="4.4" r="3.5" fill="#f0f0f0" stroke="#555" stroke-width="1.15"/><path d="M3.2 4.1h2.2" stroke="#8a8a8a" stroke-width="0.9"/></svg>
<div class="t nm" style="left:348.50px;top:74.80px">Core #2 Critical Te<span class="el">...</span></div>
<div class="t r" style="left:422.80px;width:49.40px;top:74.80px">No</div>
<div class="t r" style="left:476.80px;width:49.40px;top:74.80px">No</div>
<div class="t r" style="left:530.80px;width:49.40px;top:74.80px">No</div>
<div class="hg" style="left:335.00px;width:328px;top:95px"></div>
<svg class="ic" style="left:337.60px;top:85.70px" width="9" height="9" viewBox="0 0 9 9"><circle cx="4.5" cy="4.4" r="3.5" fill="#f0f0f0" stroke="#555" stroke-width="1.15"/><path d="M3.2 4.1h2.2" stroke="#8a8a8a" stroke-width="0.9"/></svg>
<div class="t nm" style="left:348.50px;top:86.30px">Core #3 Critical Te<span class="el">...</span></div>
<div class="t r" style="left:422.80px;width:49.40px;top:86.30px">No</div>
<div class="t r" style="left:476.80px;width:49.40px;top:86.30px">No</div>
<div class="t r" style="left:530.80px;width:49.40px;top:86.30px">No</div>
<div class="hg" style="left:335.00px;width:328px;top:106px"></div>
<svg class="ic" style="left:337.60px;top:97.20px" width="9" height="9" viewBox="0 0 9 9"><circle cx="4.5" cy="4.4" r="3.5" fill="#f0f0f0" stroke="#555" stroke-width="1.15"/><path d="M3.2 4.1h2.2" stroke="#8a8a8a" stroke-width="0.9"/></svg>
<div class="t nm" style="left:348.50px;top:97.80px">Core #0 Power Limi<span class="el">...</span></div>
<div class="t r" style="left:422.80px;width:49.40px;top:97.80px">No</div>
<div class="t r" style="left:476.80px;width:49.40px;top:97.80px">No</div>
<div class="t r" style="left:530.80px;width:49.40px;top:97.80px">No</div>
<div class="hg" style="left:335.00px;width:328px;top:118px"></div>
<svg class="ic" style="left:337.60px;top:108.70px" width="9" height="9" viewBox="0 0 9 9"><circle cx="4.5" cy="4.4" r="3.5" fill="#f0f0f0" stroke="#555" stroke-width="1.15"/><path d="M3.2 4.1h2.2" stroke="#8a8a8a" stroke-width="0.9"/></svg>
<div class="t nm" style="left:348.50px;top:109.30px">Core #1 Power Limi<span class="el">...</span></div>
<div class="t r" style="left:422.80px;width:49.40px;top:109.30px">No</div>
<div class="t r" style="left:476.80px;width:49.40px;top:109.30px">No</div>
<div class="t r" style="left:530.80px;width:49.40px;top:109.30px">No</div>
<div class="hg" style="left:335.00px;width:328px;top:129px"></div>
<svg class="ic" style="left:337.60px;top:120.20px" width="9" height="9" viewBox="0 0 9 9"><circle cx="4.5" cy="4.4" r="3.5" fill="#f0f0f0" stroke="#555" stroke-width="1.15"/><path d="M3.2 4.1h2.2" stroke="#8a8a8a" stroke-width="0.9"/></svg>
<div class="t nm" style="left:348.50px;top:120.80px">Core #2 Power Limi<span class="el">...</span></div>
<div class="t r" style="left:422.80px;width:49.40px;top:120.80px">No</div>
<div class="t r" style="left:476.80px;width:49.40px;top:120.80px">No</div>
<div class="t r" style="left:530.80px;width:49.40px;top:120.80px">No</div>
<div class="hg" style="left:335.00px;width:328px;top:141px"></div>
<svg class="ic" style="left:337.60px;top:131.70px" width="9" height="9" viewBox="0 0 9 9"><circle cx="4.5" cy="4.4" r="3.5" fill="#f0f0f0" stroke="#555" stroke-width="1.15"/><path d="M3.2 4.1h2.2" stroke="#8a8a8a" stroke-width="0.9"/></svg>
<div class="t nm" style="left:348.50px;top:132.30px">Core #3 Power Limi<span class="el">...</span></div>
<div class="t r" style="left:422.80px;width:49.40px;top:132.30px">No</div>
<div class="t r" style="left:476.80px;width:49.40px;top:132.30px">No</div>
<div class="t r" style="left:530.80px;width:49.40px;top:132.30px">No</div>
<div class="hg" style="left:335.00px;width:328px;top:152px"></div>
<svg class="ic" style="left:337.60px;top:143.20px" width="9" height="9" viewBox="0 0 9 9"><circle cx="4.5" cy="4.4" r="3.5" fill="#f0f0f0" stroke="#555" stroke-width="1.15"/><path d="M3.2 4.1h2.2" stroke="#8a8a8a" stroke-width="0.9"/></svg>
<div class="t nm" style="left:348.50px;top:143.80px">Package/Ring Ther<span class="el">...</span></div>
<div class="t r" style="left:422.80px;width:49.40px;top:143.80px">No</div>
<div class="t r" style="left:476.80px;width:49.40px;top:143.80px">No</div>
<div class="t r" style="left:530.80px;width:49.40px;top:143.80px">No</div>
<div class="hg" style="left:335.00px;width:328px;top:164px"></div>
<svg class="ic" style="left:337.60px;top:154.70px" width="9" height="9" viewBox="0 0 9 9"><circle cx="4.5" cy="4.4" r="3.5" fill="#f0f0f0" stroke="#555" stroke-width="1.15"/><path d="M3.2 4.1h2.2" stroke="#8a8a8a" stroke-width="0.9"/></svg>
<div class="t nm" style="left:348.50px;top:155.30px">Package/Ring Critic<span class="el">...</span></div>
<div class="t r" style="left:422.80px;width:49.40px;top:155.30px">No</div>
<div class="t r" style="left:476.80px;width:49.40px;top:155.30px">No</div>
<div class="t r" style="left:530.80px;width:49.40px;top:155.30px">No</div>
<div class="hg" style="left:335.00px;width:328px;top:175px"></div>
<svg class="ic" style="left:337.60px;top:166.20px" width="9" height="9" viewBox="0 0 9 9"><circle cx="4.5" cy="4.4" r="3.5" fill="#f0f0f0" stroke="#555" stroke-width="1.15"/><path d="M3.2 4.1h2.2" stroke="#8a8a8a" stroke-width="0.9"/></svg>
<div class="t nm" style="left:348.50px;top:166.80px">Package/Ring Powe<span class="el">...</span></div>
<div class="t r" style="left:422.80px;width:49.40px;top:166.80px">No</div>
<div class="t r" style="left:476.80px;width:49.40px;top:166.80px">No</div>
<div class="t r" style="left:530.80px;width:49.40px;top:166.80px">No</div>
<div class="hg" style="left:335.00px;width:328px;top:187px"></div>
<div class="hg" style="left:335.00px;width:328px;top:198px"></div>
<svg class="ic" style="left:338.00px;top:189.00px" width="8" height="9" viewBox="0 0 8 9"><rect x="1" y="0.3" width="6" height="8.4" fill="#4a4a4a"/><rect x="2" y="0.3" width="1.5" height="8.4" fill="#6a6a6a"/><path d="M0.2 1.5h1M0.2 3.2h1M0.2 4.9h1M0.2 6.6h1M6.8 1.5h1M6.8 3.2h1M6.8 4.9h1M6.8 6.6h1" stroke="#777" stroke-width="0.7"/></svg>
<div class="t nm it" style="left:348.50px;top:189.80px">CPU [#0]: Intel Cor<span class="el">...</span></div>
<div class="hg" style="left:335.00px;width:328px;top:210px"></div>
<svg class="ic" style="left:339.00px;top:199.90px" width="6" height="10" viewBox="0 0 6 10"><rect x="1.7" y="0.3" width="2.6" height="7" rx="1.2" fill="#d4dbe2" stroke="#a4adb6" stroke-width="0.6"/><rect x="2.5" y="0.8" width="1" height="2.5" fill="#a8d4f0"/><circle cx="3" cy="7.9" r="1.8" fill="#cfb0a0" stroke="#a68878" stroke-width="0.5"/><circle cx="3" cy="7.9" r="0.8" fill="#b0503a"/></svg>
<div class="t nm" style="left:348.50px;top:201.30px">CPU Package</div>
<div class="t r" style="left:422.80px;width:49.40px;top:201.30px">41 °C</div>
<div class="t r" style="left:476.80px;width:49.40px;top:201.30px">36 °C</div>
<div class="t r" style="left:530.80px;width:49.40px;top:201.30px">73 °C</div>
<div class="t r" style="left:584.80px;width:49.40px;top:201.30px">56 °C</div>
<div class="hg" style="left:335.00px;width:328px;top:221px"></div>
<svg class="ic" style="left:339.00px;top:211.40px" width="6" height="10" viewBox="0 0 6 10"><rect x="1.7" y="0.3" width="2.6" height="7" rx="1.2" fill="#d4dbe2" stroke="#a4adb6" stroke-width="0.6"/><rect x="2.5" y="0.8" width="1" height="2.5" fill="#a8d4f0"/><circle cx="3" cy="7.9" r="1.8" fill="#cfb0a0" stroke="#a68878" stroke-width="0.5"/><circle cx="3" cy="7.9" r="0.8" fill="#b0503a"/></svg>
<div class="t nm" style="left:348.50px;top:212.80px">CPU IA Cores</div>
<div class="t r" style="left:422.80px;width:49.40px;top:212.80px">41 °C</div>
<div class="t r" style="left:476.80px;width:49.40px;top:212.80px">36 °C</div>
<div class="t r" style="left:530.80px;width:49.40px;top:212.80px">73 °C</div>
<div class="t r" style="left:584.80px;width:49.40px;top:212.80px">56 °C</div>
<div class="hg" style="left:335.00px;width:328px;top:233px"></div>
<svg class="ic" style="left:339.00px;top:222.90px" width="6" height="10" viewBox="0 0 6 10"><rect x="1.7" y="0.3" width="2.6" height="7" rx="1.2" fill="#d4dbe2" stroke="#a4adb6" stroke-width="0.6"/><rect x="2.5" y="0.8" width="1" height="2.5" fill="#a8d4f0"/><circle cx="3" cy="7.9" r="1.8" fill="#cfb0a0" stroke="#a68878" stroke-width="0.5"/><circle cx="3" cy="7.9" r="0.8" fill="#b0503a"/></svg>
<div class="t nm" style="left:348.50px;top:224.30px">CPU GT Cores (Gra<span class="el">...</span></div>
<div class="t r" style="left:422.80px;width:49.40px;top:224.30px">40 °C</div>
<div class="t r" style="left:476.80px;width:49.40px;top:224.30px">36 °C</div>
<div class="t r" style="left:530.80px;width:49.40px;top:224.30px">54 °C</div>
<div class="t r" style="left:584.80px;width:49.40px;top:224.30px">44 °C</div>
<div class="hg" style="left:335.00px;width:328px;top:244px"></div>
<svg class="ic" style="left:338.50px;top:234.20px" width="7" height="10" viewBox="0 0 7 10"><path d="M1.6 0.4H5.6L4.1 3.6H5.7L1.4 9.7L2.5 5.3H0.9Z" fill="#f6d84a" stroke="#c98a1e" stroke-width="0.7" stroke-linejoin="round"/><path d="M2.3 1.2L1.8 4.6" stroke="#fff6b0" stroke-width="0.6"/></svg>
<div class="t nm" style="left:348.50px;top:235.80px">iGPU VID</div>
<div class="t r" style="left:422.80px;width:49.40px;top:235.80px">0.000 V</div>
<div class="t r" style="left:476.80px;width:49.40px;top:235.80px">0.000 V</div>
<div class="t r" style="left:530.80px;width:49.40px;top:235.80px">0.000 V</div>
<div class="t r" style="left:584.80px;width:49.40px;top:235.80px">0.000 V</div>
<div class="hg" style="left:335.00px;width:328px;top:256px"></div>
<svg class="ic" style="left:338.50px;top:245.70px" width="7" height="10" viewBox="0 0 7 10"><path d="M1.6 0.4H5.6L4.1 3.6H5.7L1.4 9.7L2.5 5.3H0.9Z" fill="#f6d84a" stroke="#c98a1e" stroke-width="0.7" stroke-linejoin="round"/><path d="M2.3 1.2L1.8 4.6" stroke="#fff6b0" stroke-width="0.6"/></svg>
<div class="t nm" style="left:348.50px;top:247.30px">CPU Package Power</div>
<div class="t r" style="left:422.80px;width:49.40px;top:247.30px">12.969 W</div>
<div class="t r" style="left:476.80px;width:49.40px;top:247.30px">12.969 W</div>
<div class="t r" style="left:530.80px;width:49.40px;top:247.30px">70.198 W</div>
<div class="t r" style="left:584.80px;width:49.40px;top:247.30px">34.588 W</div>
<div class="hg" style="left:335.00px;width:328px;top:267px"></div>
<svg class="ic" style="left:338.50px;top:257.20px" width="7" height="10" viewBox="0 0 7 10"><path d="M1.6 0.4H5.6L4.1 3.6H5.7L1.4 9.7L2.5 5.3H0.9Z" fill="#f6d84a" stroke="#c98a1e" stroke-width="0.7" stroke-linejoin="round"/><path d="M2.3 1.2L1.8 4.6" stroke="#fff6b0" stroke-width="0.6"/></svg>
<div class="t nm" style="left:348.50px;top:258.80px">IA Cores Power</div>
<div class="t r" style="left:422.80px;width:49.40px;top:258.80px">9.425 W</div>
<div class="t r" style="left:476.80px;width:49.40px;top:258.80px">9.425 W</div>
<div class="t r" style="left:530.80px;width:49.40px;top:258.80px">66.472 W</div>
<div class="t r" style="left:584.80px;width:49.40px;top:258.80px">30.882 W</div>
<div class="hg" style="left:335.00px;width:328px;top:279px"></div>
<svg class="ic" style="left:338.50px;top:268.70px" width="7" height="10" viewBox="0 0 7 10"><path d="M1.6 0.4H5.6L4.1 3.6H5.7L1.4 9.7L2.5 5.3H0.9Z" fill="#f6d84a" stroke="#c98a1e" stroke-width="0.7" stroke-linejoin="round"/><path d="M2.3 1.2L1.8 4.6" stroke="#fff6b0" stroke-width="0.6"/></svg>
<div class="t nm" style="left:348.50px;top:270.30px">GT Cores Power</div>
<div class="t r" style="left:422.80px;width:49.40px;top:270.30px">0.000 W</div>
<div class="t r" style="left:476.80px;width:49.40px;top:270.30px">0.000 W</div>
<div class="t r" style="left:530.80px;width:49.40px;top:270.30px">0.021 W</div>
<div class="t r" style="left:584.80px;width:49.40px;top:270.30px">0.001 W</div>
<div class="hg" style="left:335.00px;width:328px;top:290px"></div>
<svg class="ic" style="left:338.50px;top:280.20px" width="7" height="10" viewBox="0 0 7 10"><path d="M1.6 0.4H5.6L4.1 3.6H5.7L1.4 9.7L2.5 5.3H0.9Z" fill="#f6d84a" stroke="#c98a1e" stroke-width="0.7" stroke-linejoin="round"/><path d="M2.3 1.2L1.8 4.6" stroke="#fff6b0" stroke-width="0.6"/></svg>
<div class="t nm" style="left:348.50px;top:281.80px">Total DRAM Power</div>
<div class="t r" style="left:422.80px;width:49.40px;top:281.80px">0.767 W</div>
<div class="t r" style="left:476.80px;width:49.40px;top:281.80px">0.670 W</div>
<div class="t r" style="left:530.80px;width:49.40px;top:281.80px">1.606 W</div>
<div class="t r" style="left:584.80px;width:49.40px;top:281.80px">1.046 W</div>
<div class="hg" style="left:335.00px;width:328px;top:302px"></div>
<svg class="ic" style="left:338.50px;top:291.70px" width="7" height="10" viewBox="0 0 7 10"><path d="M1.6 0.4H5.6L4.1 3.6H5.7L1.4 9.7L2.5 5.3H0.9Z" fill="#f6d84a" stroke="#c98a1e" stroke-width="0.7" stroke-linejoin="round"/><path d="M2.3 1.2L1.8 4.6" stroke="#fff6b0" stroke-width="0.6"/></svg>
<div class="t nm" style="left:348.50px;top:293.30px">PL1 Power Limit</div>
<div class="t r" style="left:422.80px;width:49.40px;top:293.30px">4,095.875 W</div>
<div class="t r" style="left:476.80px;width:49.40px;top:293.30px">4,095.875 W</div>
<div class="t r" style="left:530.80px;width:49.40px;top:293.30px">4,095.875 W</div>
<div class="t r" style="left:584.80px;width:49.40px;top:293.30px">4,095.875 W</div>
<div class="hg" style="left:335.00px;width:328px;top:313px"></div>
<svg class="ic" style="left:338.50px;top:303.20px" width="7" height="10" viewBox="0 0 7 10"><path d="M1.6 0.4H5.6L4.1 3.6H5.7L1.4 9.7L2.5 5.3H0.9Z" fill="#f6d84a" stroke="#c98a1e" stroke-width="0.7" stroke-linejoin="round"/><path d="M2.3 1.2L1.8 4.6" stroke="#fff6b0" stroke-width="0.6"/></svg>
<div class="t nm" style="left:348.50px;top:304.80px">PL2 Power Limit</div>
<div class="t r" style="left:422.80px;width:49.40px;top:304.80px">4,095.875 W</div>
<div class="t r" style="left:476.80px;width:49.40px;top:304.80px">4,095.875 W</div>
<div class="t r" style="left:530.80px;width:49.40px;top:304.80px">4,095.875 W</div>
<div class="t r" style="left:584.80px;width:49.40px;top:304.80px">4,095.875 W</div>
<div class="hg" style="left:335.00px;width:328px;top:325px"></div>
<svg class="ic" style="left:337.60px;top:315.70px" width="9" height="9" viewBox="0 0 9 9"><circle cx="4.5" cy="4.4" r="3.5" fill="#f0f0f0" stroke="#555" stroke-width="1.15"/><path d="M3.2 4.1h2.2" stroke="#8a8a8a" stroke-width="0.9"/></svg>
<div class="t nm" style="left:348.50px;top:316.30px">GPU Clock</div>
<div class="t r" style="left:422.80px;width:49.40px;top:316.30px">0.0 MHz</div>
<div class="t r" style="left:476.80px;width:49.40px;top:316.30px">0.0 MHz</div>
<div class="t r" style="left:530.80px;width:49.40px;top:316.30px">0.0 MHz</div>
<div class="t r" style="left:584.80px;width:49.40px;top:316.30px">0.0 MHz</div>
<div class="hg" style="left:335.00px;width:328px;top:336px"></div>
<svg class="ic" style="left:337.60px;top:327.20px" width="9" height="9" viewBox="0 0 9 9"><circle cx="4.5" cy="4.4" r="3.5" fill="#f0f0f0" stroke="#555" stroke-width="1.15"/><path d="M3.2 4.1h2.2" stroke="#8a8a8a" stroke-width="0.9"/></svg>
<div class="t nm" style="left:348.50px;top:327.80px">GPU D3D Usage</div>
<div class="t r" style="left:422.80px;width:49.40px;top:327.80px">0.0 %</div>
<div class="t r" style="left:476.80px;width:49.40px;top:327.80px">0.0 %</div>
<div class="t r" style="left:530.80px;width:49.40px;top:327.80px">0.0 %</div>
<div class="t r" style="left:584.80px;width:49.40px;top:327.80px">0.0 %</div>
<div class="hg" style="left:335.00px;width:328px;top:348px"></div>
<svg class="ic" style="left:337.60px;top:338.70px" width="9" height="9" viewBox="0 0 9 9"><circle cx="4.5" cy="4.4" r="3.5" fill="#f0f0f0" stroke="#555" stroke-width="1.15"/><path d="M3.2 4.1h2.2" stroke="#8a8a8a" stroke-width="0.9"/></svg>
<div class="t nm" style="left:348.50px;top:339.30px">GPU D3D Memory D<span class="el">...</span></div>
<div class="t r" style="left:422.80px;width:49.40px;top:339.30px">0 MB</div>
<div class="t r" style="left:476.80px;width:49.40px;top:339.30px">0 MB</div>
<div class="t r" style="left:530.80px;width:49.40px;top:339.30px">0 MB</div>
<div class="t r" style="left:584.80px;width:49.40px;top:339.30px">0 MB</div>
<div class="hg" style="left:335.00px;width:328px;top:359px"></div>
<svg class="ic" style="left:337.60px;top:350.20px" width="9" height="9" viewBox="0 0 9 9"><circle cx="4.5" cy="4.4" r="3.5" fill="#f0f0f0" stroke="#555" stroke-width="1.15"/><path d="M3.2 4.1h2.2" stroke="#8a8a8a" stroke-width="0.9"/></svg>
<div class="t nm" style="left:348.50px;top:350.80px">Current cTDP Level</div>
<div class="t r" style="left:422.80px;width:49.40px;top:350.80px">0</div>
<div class="t r" style="left:476.80px;width:49.40px;top:350.80px">0</div>
<div class="t r" style="left:530.80px;width:49.40px;top:350.80px">0</div>
<div class="t r" style="left:584.80px;width:49.40px;top:350.80px">0</div>
<div class="hg" style="left:335.00px;width:328px;top:371px"></div>
<div class="hg" style="left:335.00px;width:328px;top:382px"></div>
<svg class="ic" style="left:338.00px;top:373.00px" width="8" height="9" viewBox="0 0 8 9"><rect x="1" y="0.3" width="6" height="8.4" fill="#4a4a4a"/><rect x="2" y="0.3" width="1.5" height="8.4" fill="#6a6a6a"/><path d="M0.2 1.5h1M0.2 3.2h1M0.2 4.9h1M0.2 6.6h1M6.8 1.5h1M6.8 3.2h1M6.8 4.9h1M6.8 6.6h1" stroke="#777" stroke-width="0.7"/></svg>
<div class="t nm it" style="left:348.50px;top:373.80px">CPU [#0]: Intel Cor<span class="el">...</span></div>
<div class="hg" style="left:335.00px;width:328px;top:394px"></div>
<svg class="ic" style="left:337.60px;top:384.70px" width="9" height="9" viewBox="0 0 9 9"><circle cx="4.5" cy="4.4" r="3.5" fill="#f0f0f0" stroke="#555" stroke-width="1.15"/><path d="M3.2 4.1h2.2" stroke="#8a8a8a" stroke-width="0.9"/></svg>
<div class="t nm" style="left:348.50px;top:385.30px">Package C2 Reside<span class="el">...</span></div>
<div class="t r" style="left:422.80px;width:49.40px;top:385.30px">21.4 %</div>
<div class="t r" style="left:476.80px;width:49.40px;top:385.30px">0.0 %</div>
<div class="t r" style="left:530.80px;width:49.40px;top:385.30px">21.4 %</div>
<div class="t r" style="left:584.80px;width:49.40px;top:385.30px">2.9 %</div>
<div class="hg" style="left:335.00px;width:328px;top:405px"></div>
<svg class="ic" style="left:337.60px;top:396.20px" width="9" height="9" viewBox="0 0 9 9"><circle cx="4.5" cy="4.4" r="3.5" fill="#f0f0f0" stroke="#555" stroke-width="1.15"/><path d="M3.2 4.1h2.2" stroke="#8a8a8a" stroke-width="0.9"/></svg>
<div class="t nm" style="left:348.50px;top:396.80px">Package C3 Reside<span class="el">...</span></div>
<div class="t r" style="left:422.80px;width:49.40px;top:396.80px">16.2 %</div>
<div class="t r" style="left:476.80px;width:49.40px;top:396.80px">0.0 %</div>
<div class="t r" style="left:530.80px;width:49.40px;top:396.80px">16.2 %</div>
<div class="t r" style="left:584.80px;width:49.40px;top:396.80px">2.5 %</div>
<div class="hg" style="left:335.00px;width:328px;top:417px"></div>
<svg class="ic" style="left:337.60px;top:407.70px" width="9" height="9" viewBox="0 0 9 9"><circle cx="4.5" cy="4.4" r="3.5" fill="#f0f0f0" stroke="#555" stroke-width="1.15"/><path d="M3.2 4.1h2.2" stroke="#8a8a8a" stroke-width="0.9"/></svg>
<div class="t nm" style="left:348.50px;top:408.30px">Core #0 Thread 0 <span class="el">...</span></div>
<div class="t r" style="left:422.80px;width:49.40px;top:408.30px">8.0 %</div>
<div class="t r" style="left:476.80px;width:49.40px;top:408.30px">7.3 %</div>
<div class="t r" style="left:530.80px;width:49.40px;top:408.30px">92.4 %</div>
<div class="t r" style="left:584.80px;width:49.40px;top:408.30px">31.1 %</div>
<div class="hg" style="left:335.00px;width:328px;top:428px"></div>
<svg class="ic" style="left:337.60px;top:419.20px" width="9" height="9" viewBox="0 0 9 9"><circle cx="4.5" cy="4.4" r="3.5" fill="#f0f0f0" stroke="#555" stroke-width="1.15"/><path d="M3.2 4.1h2.2" stroke="#8a8a8a" stroke-width="0.9"/></svg>
<div class="t nm" style="left:348.50px;top:419.80px">Core #0 Thread 1 <span class="el">...</span></div>
<div class="t r" style="left:422.80px;width:49.40px;top:419.80px">5.7 %</div>
<div class="t r" style="left:476.80px;width:49.40px;top:419.80px">4.8 %</div>
<div class="t r" style="left:530.80px;width:49.40px;top:419.80px">91.4 %</div>
<div class="t r" style="left:584.80px;width:49.40px;top:419.80px">26.7 %</div>
<div class="hg" style="left:335.00px;width:328px;top:440px"></div>
<svg class="ic" style="left:337.60px;top:430.70px" width="9" height="9" viewBox="0 0 9 9"><circle cx="4.5" cy="4.4" r="3.5" fill="#f0f0f0" stroke="#555" stroke-width="1.15"/><path d="M3.2 4.1h2.2" stroke="#8a8a8a" stroke-width="0.9"/></svg>
<div class="t nm" style="left:348.50px;top:431.30px">Core #1 Thread 0 <span class="el">...</span></div>
<div class="t r" style="left:422.80px;width:49.40px;top:431.30px">4.7 %</div>
<div class="t r" style="left:476.80px;width:49.40px;top:431.30px">4.7 %</div>
<div class="t r" style="left:530.80px;width:49.40px;top:431.30px">91.4 %</div>
<div class="t r" style="left:584.80px;width:49.40px;top:431.30px">30.3 %</div>
<div class="hg" style="left:335.00px;width:328px;top:451px"></div>
<svg class="ic" style="left:337.60px;top:442.20px" width="9" height="9" viewBox="0 0 9 9"><circle cx="4.5" cy="4.4" r="3.5" fill="#f0f0f0" stroke="#555" stroke-width="1.15"/><path d="M3.2 4.1h2.2" stroke="#8a8a8a" stroke-width="0.9"/></svg>
<div class="t nm" style="left:348.50px;top:442.80px">Core #1 Thread 1 <span class="el">...</span></div>
<div class="t r" style="left:422.80px;width:49.40px;top:442.80px">1.4 %</div>
<div class="t r" style="left:476.80px;width:49.40px;top:442.80px">1.2 %</div>
<div class="t r" style="left:530.80px;width:49.40px;top:442.80px">91.0 %</div>
<div class="t r" style="left:584.80px;width:49.40px;top:442.80px">16.8 %</div>
<div class="hg" style="left:335.00px;width:328px;top:463px"></div>
<svg class="ic" style="left:337.60px;top:453.70px" width="9" height="9" viewBox="0 0 9 9"><circle cx="4.5" cy="4.4" r="3.5" fill="#f0f0f0" stroke="#555" stroke-width="1.15"/><path d="M3.2 4.1h2.2" stroke="#8a8a8a" stroke-width="0.9"/></svg>
<div class="t nm" style="left:348.50px;top:454.30px">Core #2 Thread 0 <span class="el">...</span></div>
<div class="t r" style="left:422.80px;width:49.40px;top:454.30px">9.1 %</div>
<div class="t r" style="left:476.80px;width:49.40px;top:454.30px">5.0 %</div>
<div class="t r" style="left:530.80px;width:49.40px;top:454.30px">91.3 %</div>
<div class="t r" style="left:584.80px;width:49.40px;top:454.30px">37.9 %</div>
<div class="hg" style="left:335.00px;width:328px;top:474px"></div>
<svg class="ic" style="left:337.60px;top:465.20px" width="9" height="9" viewBox="0 0 9 9"><circle cx="4.5" cy="4.4" r="3.5" fill="#f0f0f0" stroke="#555" stroke-width="1.15"/><path d="M3.2 4.1h2.2" stroke="#8a8a8a" stroke-width="0.9"/></svg>
<div class="t nm" style="left:348.50px;top:465.80px">Core #2 Thread 1 <span class="el">...</span></div>
<div class="t r" style="left:422.80px;width:49.40px;top:465.80px">1.0 %</div>
<div class="t r" style="left:476.80px;width:49.40px;top:465.80px">1.0 %</div>
<div class="t r" style="left:530.80px;width:49.40px;top:465.80px">90.6 %</div>
<div class="t r" style="left:584.80px;width:49.40px;top:465.80px">16.9 %</div>
<div class="hg" style="left:335.00px;width:328px;top:486px"></div>
<svg class="ic" style="left:337.60px;top:476.70px" width="9" height="9" viewBox="0 0 9 9"><circle cx="4.5" cy="4.4" r="3.5" fill="#f0f0f0" stroke="#555" stroke-width="1.15"/><path d="M3.2 4.1h2.2" stroke="#8a8a8a" stroke-width="0.9"/></svg>
<div class="t nm" style="left:348.50px;top:477.30px">Core #3 Thread 0 <span class="el">...</span></div>
<div class="t r" style="left:422.80px;width:49.40px;top:477.30px">12.8 %</div>
<div class="t r" style="left:476.80px;width:49.40px;top:477.30px">7.0 %</div>
<div class="t r" style="left:530.80px;width:49.40px;top:477.30px">94.2 %</div>
<div class="t r" style="left:584.80px;width:49.40px;top:477.30px">32.6 %</div>
<div class="hg" style="left:335.00px;width:328px;top:497px"></div>
<svg class="ic" style="left:337.60px;top:488.20px" width="9" height="9" viewBox="0 0 9 9"><circle cx="4.5" cy="4.4" r="3.5" fill="#f0f0f0" stroke="#555" stroke-width="1.15"/><path d="M3.2 4.1h2.2" stroke="#8a8a8a" stroke-width="0.9"/></svg>
<div class="t nm" style="left:348.50px;top:488.80px">Core #3 Thread 1 <span class="el">...</span></div>
<div class="t r" style="left:422.80px;width:49.40px;top:488.80px">2.6 %</div>
<div class="t r" style="left:476.80px;width:49.40px;top:488.80px">2.6 %</div>
<div class="t r" style="left:530.80px;width:49.40px;top:488.80px">90.8 %</div>
<div class="t r" style="left:584.80px;width:49.40px;top:488.80px">21.9 %</div>
<div class="hg" style="left:335.00px;width:328px;top:509px"></div>
<svg class="ic" style="left:337.60px;top:499.70px" width="9" height="9" viewBox="0 0 9 9"><circle cx="4.5" cy="4.4" r="3.5" fill="#f0f0f0" stroke="#555" stroke-width="1.15"/><path d="M3.2 4.1h2.2" stroke="#8a8a8a" stroke-width="0.9"/></svg>
<div class="t nm" style="left:348.50px;top:500.30px">Core #0 C3 Reside<span class="el">...</span></div>
<div class="t r" style="left:422.80px;width:49.40px;top:500.30px">8.7 %</div>
<div class="t r" style="left:476.80px;width:49.40px;top:500.30px">0.0 %</div>
<div class="t r" style="left:530.80px;width:49.40px;top:500.30px">23.0 %</div>
<div class="t r" style="left:584.80px;width:49.40px;top:500.30px">4.6 %</div>
<div class="hg" style="left:335.00px;width:328px;top:520px"></div>
<svg class="ic" style="left:337.60px;top:511.20px" width="9" height="9" viewBox="0 0 9 9"><circle cx="4.5" cy="4.4" r="3.5" fill="#f0f0f0" stroke="#555" stroke-width="1.15"/><path d="M3.2 4.1h2.2" stroke="#8a8a8a" stroke-width="0.9"/></svg>
<div class="t nm" style="left:348.50px;top:511.80px">Core #1 C3 Reside<span class="el">...</span></div>
<div class="t r" style="left:422.80px;width:49.40px;top:511.80px">8.2 %</div>
<div class="t r" style="left:476.80px;width:49.40px;top:511.80px">0.0 %</div>
<div class="t r" style="left:530.80px;width:49.40px;top:511.80px">16.2 %</div>
<div class="t r" style="left:584.80px;width:49.40px;top:511.80px">5.2 %</div>
<div class="hg" style="left:335.00px;width:328px;top:532px"></div>
<svg class="ic" style="left:337.60px;top:522.70px" width="9" height="9" viewBox="0 0 9 9"><circle cx="4.5" cy="4.4" r="3.5" fill="#f0f0f0" stroke="#555" stroke-width="1.15"/><path d="M3.2 4.1h2.2" stroke="#8a8a8a" stroke-width="0.9"/></svg>
<div class="t nm" style="left:348.50px;top:523.30px">Core #2 C3 Reside<span class="el">...</span></div>
<div class="t r" style="left:422.80px;width:49.40px;top:523.30px">11.5 %</div>
<div class="t r" style="left:476.80px;width:49.40px;top:523.30px">0.0 %</div>
<div class="t r" style="left:530.80px;width:49.40px;top:523.30px">30.3 %</div>
<div class="t r" style="left:584.80px;width:49.40px;top:523.30px">6.3 %</div>
<div class="hg" style="left:335.00px;width:328px;top:543px"></div>
<svg class="ic" style="left:337.60px;top:534.20px" width="9" height="9" viewBox="0 0 9 9"><circle cx="4.5" cy="4.4" r="3.5" fill="#f0f0f0" stroke="#555" stroke-width="1.15"/><path d="M3.2 4.1h2.2" stroke="#8a8a8a" stroke-width="0.9"/></svg>
<div class="t nm" style="left:348.50px;top:534.80px">Core #3 C3 Reside<span class="el">...</span></div>
<div class="t r" style="left:422.80px;width:49.40px;top:534.80px">9.9 %</div>
<div class="t r" style="left:476.80px;width:49.40px;top:534.80px">0.0 %</div>
<div class="t r" style="left:530.80px;width:49.40px;top:534.80px">17.1 %</div>
<div class="t r" style="left:584.80px;width:49.40px;top:534.80px">5.1 %</div>
<div class="hg" style="left:335.00px;width:328px;top:555px"></div>
<svg class="ic" style="left:337.60px;top:545.70px" width="9" height="9" viewBox="0 0 9 9"><circle cx="4.5" cy="4.4" r="3.5" fill="#f0f0f0" stroke="#555" stroke-width="1.15"/><path d="M3.2 4.1h2.2" stroke="#8a8a8a" stroke-width="0.9"/></svg>
<div class="t nm" style="left:348.50px;top:546.30px">Core #0 C7 Reside<span class="el">...</span></div>
<div class="t r" style="left:422.80px;width:49.40px;top:546.30px">54.4 %</div>
<div class="t r" style="left:476.80px;width:49.40px;top:546.30px">0.0 %</div>
<div class="t r" style="left:530.80px;width:49.40px;top:546.30px">60.6 %</div>
<div class="t r" style="left:584.80px;width:49.40px;top:546.30px">29.9 %</div>
<div class="hg" style="left:335.00px;width:328px;top:566px"></div>
<svg class="ic" style="left:337.60px;top:557.20px" width="9" height="9" viewBox="0 0 9 9"><circle cx="4.5" cy="4.4" r="3.5" fill="#f0f0f0" stroke="#555" stroke-width="1.15"/><path d="M3.2 4.1h2.2" stroke="#8a8a8a" stroke-width="0.9"/></svg>
<div class="t nm" style="left:348.50px;top:557.80px">Core #1 C7 Reside<span class="el">...</span></div>
<div class="t r" style="left:422.80px;width:49.40px;top:557.80px">73.1 %</div>
<div class="t r" style="left:476.80px;width:49.40px;top:557.80px">0.0 %</div>
<div class="t r" style="left:530.80px;width:49.40px;top:557.80px">73.1 %</div>
<div class="t r" style="left:584.80px;width:49.40px;top:557.80px">40.6 %</div>
<div class="hg" style="left:335.00px;width:328px;top:578px"></div>
<svg class="ic" style="left:337.60px;top:568.70px" width="9" height="9" viewBox="0 0 9 9"><circle cx="4.5" cy="4.4" r="3.5" fill="#f0f0f0" stroke="#555" stroke-width="1.15"/><path d="M3.2 4.1h2.2" stroke="#8a8a8a" stroke-width="0.9"/></svg>
<div class="t nm" style="left:348.50px;top:569.30px">Core #2 C7 Reside<span class="el">...</span></div>
<div class="t r" style="left:422.80px;width:49.40px;top:569.30px">62.7 %</div>
<div class="t r" style="left:476.80px;width:49.40px;top:569.30px">0.0 %</div>
<div class="t r" style="left:530.80px;width:49.40px;top:569.30px">63.8 %</div>
<div class="t r" style="left:584.80px;width:49.40px;top:569.30px">32.0 %</div>
<div class="hg" style="left:335.00px;width:328px;top:589px"></div>
<svg class="ic" style="left:337.60px;top:580.20px" width="9" height="9" viewBox="0 0 9 9"><circle cx="4.5" cy="4.4" r="3.5" fill="#f0f0f0" stroke="#555" stroke-width="1.15"/><path d="M3.2 4.1h2.2" stroke="#8a8a8a" stroke-width="0.9"/></svg>
<div class="t nm" style="left:348.50px;top:580.80px">Core #3 C7 Reside<span class="el">...</span></div>
<div class="t r" style="left:422.80px;width:49.40px;top:580.80px">58.5 %</div>
<div class="t r" style="left:476.80px;width:49.40px;top:580.80px">0.0 %</div>
<div class="t r" style="left:530.80px;width:49.40px;top:580.80px">66.4 %</div>
<div class="t r" style="left:584.80px;width:49.40px;top:580.80px">36.5 %</div>
<div class="hg" style="left:335.00px;width:328px;top:601px"></div>
<div class="hg" style="left:335.00px;width:328px;top:612px"></div>
<svg class="ic" style="left:338.00px;top:603.00px" width="8" height="9" viewBox="0 0 8 9"><rect x="1" y="0.3" width="6" height="8.4" fill="#4a4a4a"/><rect x="2" y="0.3" width="1.5" height="8.4" fill="#6a6a6a"/><path d="M0.2 1.5h1M0.2 3.2h1M0.2 4.9h1M0.2 6.6h1M6.8 1.5h1M6.8 3.2h1M6.8 4.9h1M6.8 6.6h1" stroke="#777" stroke-width="0.7"/></svg>
<div class="t nm it" style="left:348.50px;top:603.80px">Memory Timings</div>
<div class="hg" style="left:335.00px;width:328px;top:624px"></div>
<svg class="ic" style="left:337.60px;top:614.70px" width="9" height="9" viewBox="0 0 9 9"><circle cx="4.5" cy="4.4" r="3.5" fill="#f0f0f0" stroke="#555" stroke-width="1.15"/><path d="M3.2 4.1h2.2" stroke="#8a8a8a" stroke-width="0.9"/></svg>
<div class="t nm" style="left:348.50px;top:615.30px">Memory Clock</div>
<div class="t r" style="left:422.80px;width:49.40px;top:615.30px">1,197.1 MHz</div>
<div class="t r" style="left:476.80px;width:49.40px;top:615.30px">1,195.6 MHz</div>
<div class="t r" style="left:530.80px;width:49.40px;top:615.30px">1,198.2 MHz</div>
<div class="t r" style="left:584.80px;width:49.40px;top:615.30px">1,197.1 MHz</div>
<div class="hg" style="left:335.00px;width:328px;top:635px"></div>
<div class="vg" style="left:754.90px"></div>
<div class="vh" style="left:754.90px"></div>
<div class="vg" style="left:808.90px"></div>
<div class="vh" style="left:808.90px"></div>
<div class="vg" style="left:862.90px"></div>
<div class="vh" style="left:862.90px"></div>
<div class="vg" style="left:916.90px"></div>
<div class="vh" style="left:916.90px"></div>
<div class="vg" style="left:970.90px"></div>
<div class="vh" style="left:970.90px"></div>
<div class="t hd" style="left:670.10px;top:26.2px">Sensor</div>
<div class="t hd r" style="left:755.40px;width:50.00px;top:26.2px">Current</div>
<div class="t hd r" style="left:809.40px;width:50.00px;top:26.2px">Minimum</div>
<div class="t hd r" style="left:863.40px;width:50.00px;top:26.2px">Maximum</div>
<div class="t hd r" style="left:917.40px;width:50.00px;top:26.2px">Average</div>
<div class="hg" style="left:667.60px;width:320px;top:49px"></div>
<svg class="ic" style="left:670.60px;top:39.50px" width="8" height="9" viewBox="0 0 8 9"><rect x="1" y="0.3" width="6" height="8.4" fill="#4a4a4a"/><rect x="2" y="0.3" width="1.5" height="8.4" fill="#6a6a6a"/><path d="M0.2 1.5h1M0.2 3.2h1M0.2 4.9h1M0.2 6.6h1M6.8 1.5h1M6.8 3.2h1M6.8 4.9h1M6.8 6.6h1" stroke="#777" stroke-width="0.7"/></svg>
<div class="t nm it" style="left:681.10px;top:40.30px">Drive: Crucial_CT10<span class="el">...</span></div>
<div class="hg" style="left:667.60px;width:320px;top:60px"></div>
<svg class="ic" style="left:670.20px;top:51.20px" width="9" height="9" viewBox="0 0 9 9"><circle cx="4.5" cy="4.4" r="3.5" fill="#f0f0f0" stroke="#555" stroke-width="1.15"/><path d="M3.2 4.1h2.2" stroke="#8a8a8a" stroke-width="0.9"/></svg>
<div class="t nm" style="left:681.10px;top:51.80px">Read Activity</div>
<div class="t r" style="left:755.40px;width:49.40px;top:51.80px">0.2 %</div>
<div class="t r" style="left:809.40px;width:49.40px;top:51.80px">0.0 %</div>
<div class="t r" style="left:863.40px;width:49.40px;top:51.80px">10.4 %</div>
<div class="t r" style="left:917.40px;width:49.40px;top:51.80px">0.3 %</div>
<div class="hg" style="left:667.60px;width:320px;top:72px"></div>
<svg class="ic" style="left:670.20px;top:62.70px" width="9" height="9" viewBox="0 0 9 9"><circle cx="4.5" cy="4.4" r="3.5" fill="#f0f0f0" stroke="#555" stroke-width="1.15"/><path d="M3.2 4.1h2.2" stroke="#8a8a8a" stroke-width="0.9"/></svg>
<div class="t nm" style="left:681.10px;top:63.30px">Write Activity</div>
<div class="t r" style="left:755.40px;width:49.40px;top:63.30px">17.4 %</div>
<div class="t r" style="left:809.40px;width:49.40px;top:63.30px">0.0 %</div>
<div class="t r" style="left:863.40px;width:49.40px;top:63.30px">49.9 %</div>
<div class="t r" style="left:917.40px;width:49.40px;top:63.30px">7.1 %</div>
<div class="hg" style="left:667.60px;width:320px;top:83px"></div>
<svg class="ic" style="left:670.20px;top:74.20px" width="9" height="9" viewBox="0 0 9 9"><circle cx="4.5" cy="4.4" r="3.5" fill="#f0f0f0" stroke="#555" stroke-width="1.15"/><path d="M3.2 4.1h2.2" stroke="#8a8a8a" stroke-width="0.9"/></svg>
<div class="t nm" style="left:681.10px;top:74.80px">Total Activity</div>
<div class="t r" style="left:755.40px;width:49.40px;top:74.80px">17.6 %</div>
<div class="t r" style="left:809.40px;width:49.40px;top:74.80px">0.0 %</div>
<div class="t r" style="left:863.40px;width:49.40px;top:74.80px">50.5 %</div>
<div class="t r" style="left:917.40px;width:49.40px;top:74.80px">7.4 %</div>
<div class="hg" style="left:667.60px;width:320px;top:95px"></div>
<svg class="ic" style="left:670.20px;top:85.70px" width="9" height="9" viewBox="0 0 9 9"><circle cx="4.5" cy="4.4" r="3.5" fill="#f0f0f0" stroke="#555" stroke-width="1.15"/><path d="M3.2 4.1h2.2" stroke="#8a8a8a" stroke-width="0.9"/></svg>
<div class="t nm" style="left:681.10px;top:86.30px">Read Rate</div>
<div class="t r" style="left:755.40px;width:49.40px;top:86.30px">0.029 MB/s</div>
<div class="t r" style="left:809.40px;width:49.40px;top:86.30px">0.000 MB/s</div>
<div class="t r" style="left:863.40px;width:49.40px;top:86.30px">28.761 MB/s</div>
<div class="t r" style="left:917.40px;width:49.40px;top:86.30px">0.266 MB/s</div>
<div class="hg" style="left:667.60px;width:320px;top:106px"></div>
<svg class="ic" style="left:670.20px;top:97.20px" width="9" height="9" viewBox="0 0 9 9"><circle cx="4.5" cy="4.4" r="3.5" fill="#f0f0f0" stroke="#555" stroke-width="1.15"/><path d="M3.2 4.1h2.2" stroke="#8a8a8a" stroke-width="0.9"/></svg>
<div class="t nm" style="left:681.10px;top:97.80px">Write Rate</div>
<div class="t r" style="left:755.40px;width:49.40px;top:97.80px">35.046 MB/s</div>
<div class="t r" style="left:809.40px;width:49.40px;top:97.80px">0.001 MB/s</div>
<div class="t r" style="left:863.40px;width:49.40px;top:97.80px">41.516 MB/s</div>
<div class="t r" style="left:917.40px;width:49.40px;top:97.80px">21.940 MB/s</div>
<div class="hg" style="left:667.60px;width:320px;top:118px"></div>
<svg class="ic" style="left:670.20px;top:108.70px" width="9" height="9" viewBox="0 0 9 9"><circle cx="4.5" cy="4.4" r="3.5" fill="#f0f0f0" stroke="#555" stroke-width="1.15"/><path d="M3.2 4.1h2.2" stroke="#8a8a8a" stroke-width="0.9"/></svg>
<div class="t nm" style="left:681.10px;top:109.30px">Read Total</div>
<div class="t r" style="left:755.40px;width:49.40px;top:109.30px">199,268 MB</div>
<div class="t r" style="left:809.40px;width:49.40px;top:109.30px">199,199 MB</div>
<div class="t r" style="left:863.40px;width:49.40px;top:109.30px">199,268 MB</div>
<div class="hg" style="left:667.60px;width:320px;top:129px"></div>
<svg class="ic" style="left:670.20px;top:120.20px" width="9" height="9" viewBox="0 0 9 9"><circle cx="4.5" cy="4.4" r="3.5" fill="#f0f0f0" stroke="#555" stroke-width="1.15"/><path d="M3.2 4.1h2.2" stroke="#8a8a8a" stroke-width="0.9"/></svg>
<div class="t nm" style="left:681.10px;top:120.80px">Write Total</div>
<div class="t r" style="left:755.40px;width:49.40px;top:120.80px">4,850,213 MB</div>
<div class="t r" style="left:809.40px;width:49.40px;top:120.80px">4,844,529 MB</div>
<div class="t r" style="left:863.40px;width:49.40px;top:120.80px">4,850,213 MB</div>
<div class="hg" style="left:667.60px;width:320px;top:141px"></div>
<div class="hg" style="left:667.60px;width:320px;top:152px"></div>
<svg class="ic" style="left:670.60px;top:143.00px" width="8" height="9" viewBox="0 0 8 9"><rect x="1" y="0.3" width="6" height="8.4" fill="#4a4a4a"/><rect x="2" y="0.3" width="1.5" height="8.4" fill="#6a6a6a"/><path d="M0.2 1.5h1M0.2 3.2h1M0.2 4.9h1M0.2 6.6h1M6.8 1.5h1M6.8 3.2h1M6.8 4.9h1M6.8 6.6h1" stroke="#777" stroke-width="0.7"/></svg>
<div class="t nm it" style="left:681.10px;top:143.80px">COMPAL EC: Alienw<span class="el">...</span></div>
<div class="hg" style="left:667.60px;width:320px;top:164px"></div>
<svg class="ic" style="left:671.60px;top:153.90px" width="6" height="10" viewBox="0 0 6 10"><rect x="1.7" y="0.3" width="2.6" height="7" rx="1.2" fill="#d4dbe2" stroke="#a4adb6" stroke-width="0.6"/><rect x="2.5" y="0.8" width="1" height="2.5" fill="#a8d4f0"/><circle cx="3" cy="7.9" r="1.8" fill="#cfb0a0" stroke="#a68878" stroke-width="0.5"/><circle cx="3" cy="7.9" r="0.8" fill="#b0503a"/></svg>
<div class="t nm" style="left:681.10px;top:155.30px">CPU</div>
<div class="t r" style="left:755.40px;width:49.40px;top:155.30px">43.0 °C</div>
<div class="t r" style="left:809.40px;width:49.40px;top:155.30px">38.0 °C</div>
<div class="t r" style="left:863.40px;width:49.40px;top:155.30px">73.0 °C</div>
<div class="t r" style="left:917.40px;width:49.40px;top:155.30px">56.9 °C</div>
<div class="hg" style="left:667.60px;width:320px;top:175px"></div>
<svg class="ic" style="left:670.10px;top:165.80px" width="9" height="8" viewBox="0 0 9 8"><rect x="0.3" y="0.2" width="8" height="7.6" fill="#3a3a3a"/><path d="M2 2h1.5v1.5h-1.5zM5.2 2h1.5v1.5h-1.5zM2 4.6h1.5v1.5h-1.5zM5.2 4.6h1.5v1.5h-1.5z" fill="#ddd"/><path d="M4 0.3v1.5M4.5 6.2v1.5M0.3 3.9h1.5M6.8 3.9h1.5" stroke="#aaa" stroke-width="0.6"/></svg>
<div class="t nm" style="left:681.10px;top:166.80px">CPU</div>
<div class="t r" style="left:755.40px;width:49.40px;top:166.80px">4,300 RPM</div>
<div class="t r" style="left:809.40px;width:49.40px;top:166.80px">4,200 RPM</div>
<div class="t r" style="left:863.40px;width:49.40px;top:166.80px">4,300 RPM</div>
<div class="t r" style="left:917.40px;width:49.40px;top:166.80px">4,253 RPM</div>
<div class="hg" style="left:667.60px;width:320px;top:187px"></div>
<svg class="ic" style="left:670.10px;top:177.30px" width="9" height="8" viewBox="0 0 9 8"><rect x="0.3" y="0.2" width="8" height="7.6" fill="#3a3a3a"/><path d="M2 2h1.5v1.5h-1.5zM5.2 2h1.5v1.5h-1.5zM2 4.6h1.5v1.5h-1.5zM5.2 4.6h1.5v1.5h-1.5z" fill="#ddd"/><path d="M4 0.3v1.5M4.5 6.2v1.5M0.3 3.9h1.5M6.8 3.9h1.5" stroke="#aaa" stroke-width="0.6"/></svg>
<div class="t nm" style="left:681.10px;top:178.30px">GPU1</div>
<div class="t r" style="left:755.40px;width:49.40px;top:178.30px">4,300 RPM</div>
<div class="t r" style="left:809.40px;width:49.40px;top:178.30px">4,200 RPM</div>
<div class="t r" style="left:863.40px;width:49.40px;top:178.30px">4,300 RPM</div>
<div class="t r" style="left:917.40px;width:49.40px;top:178.30px">4,287 RPM</div>
<div class="hg" style="left:667.60px;width:320px;top:198px"></div>
<div class="hg" style="left:667.60px;width:320px;top:210px"></div>
<svg class="ic" style="left:670.60px;top:200.50px" width="8" height="9" viewBox="0 0 8 9"><rect x="1" y="0.3" width="6" height="8.4" fill="#4a4a4a"/><rect x="2" y="0.3" width="1.5" height="8.4" fill="#6a6a6a"/><path d="M0.2 1.5h1M0.2 3.2h1M0.2 4.9h1M0.2 6.6h1M6.8 1.5h1M6.8 3.2h1M6.8 4.9h1M6.8 6.6h1" stroke="#777" stroke-width="0.7"/></svg>
<div class="t nm it" style="left:681.10px;top:201.30px">GPU [#1]: NVIDIA <span class="el">...</span></div>
<div class="hg" style="left:667.60px;width:320px;top:221px"></div>
<svg class="ic" style="left:671.60px;top:211.40px" width="6" height="10" viewBox="0 0 6 10"><rect x="1.7" y="0.3" width="2.6" height="7" rx="1.2" fill="#d4dbe2" stroke="#a4adb6" stroke-width="0.6"/><rect x="2.5" y="0.8" width="1" height="2.5" fill="#a8d4f0"/><circle cx="3" cy="7.9" r="1.8" fill="#cfb0a0" stroke="#a68878" stroke-width="0.5"/><circle cx="3" cy="7.9" r="0.8" fill="#b0503a"/></svg>
<div class="t nm" style="left:681.10px;top:212.80px">GPU Temperature</div>
<div class="t r" style="left:755.40px;width:49.40px;top:212.80px">41 °C</div>
<div class="t r" style="left:809.40px;width:49.40px;top:212.80px">37 °C</div>
<div class="t r" style="left:863.40px;width:49.40px;top:212.80px">52 °C</div>
<div class="t r" style="left:917.40px;width:49.40px;top:212.80px">43 °C</div>
<div class="hg" style="left:667.60px;width:320px;top:233px"></div>
<svg class="ic" style="left:671.60px;top:222.90px" width="6" height="10" viewBox="0 0 6 10"><rect x="1.7" y="0.3" width="2.6" height="7" rx="1.2" fill="#d4dbe2" stroke="#a4adb6" stroke-width="0.6"/><rect x="2.5" y="0.8" width="1" height="2.5" fill="#a8d4f0"/><circle cx="3" cy="7.9" r="1.8" fill="#cfb0a0" stroke="#a68878" stroke-width="0.5"/><circle cx="3" cy="7.9" r="0.8" fill="#b0503a"/></svg>
<div class="t nm" style="left:681.10px;top:224.30px">GPU Temperature (<span class="el">...</span></div>
<div class="t r" style="left:755.40px;width:49.40px;top:224.30px">41 °C</div>
<div class="t r" style="left:809.40px;width:49.40px;top:224.30px">37 °C</div>
<div class="t r" style="left:863.40px;width:49.40px;top:224.30px">52 °C</div>
<div class="t r" style="left:917.40px;width:49.40px;top:224.30px">43 °C</div>
<div class="hg" style="left:667.60px;width:320px;top:244px"></div>
<svg class="ic" style="left:671.10px;top:234.20px" width="7" height="10" viewBox="0 0 7 10"><path d="M1.6 0.4H5.6L4.1 3.6H5.7L1.4 9.7L2.5 5.3H0.9Z" fill="#f6d84a" stroke="#c98a1e" stroke-width="0.7" stroke-linejoin="round"/><path d="M2.3 1.2L1.8 4.6" stroke="#fff6b0" stroke-width="0.6"/></svg>
<div class="t nm" style="left:681.10px;top:235.80px">GPU Core Voltage</div>
<div class="t r" style="left:755.40px;width:49.40px;top:235.80px">0.744 V</div>
<div class="t r" style="left:809.40px;width:49.40px;top:235.80px">0.744 V</div>
<div class="t r" style="left:863.40px;width:49.40px;top:235.80px">1.050 V</div>
<div class="t r" style="left:917.40px;width:49.40px;top:235.80px">0.783 V</div>
<div class="hg" style="left:667.60px;width:320px;top:256px"></div>
<svg class="ic" style="left:671.10px;top:245.70px" width="7" height="10" viewBox="0 0 7 10"><path d="M1.6 0.4H5.6L4.1 3.6H5.7L1.4 9.7L2.5 5.3H0.9Z" fill="#f6d84a" stroke="#c98a1e" stroke-width="0.7" stroke-linejoin="round"/><path d="M2.3 1.2L1.8 4.6" stroke="#fff6b0" stroke-width="0.6"/></svg>
<div class="t nm" style="left:681.10px;top:247.30px">GPU Power</div>
<div class="t r" style="left:755.40px;width:49.40px;top:247.30px">38.075 W</div>
<div class="t r" style="left:809.40px;width:49.40px;top:247.30px">37.298 W</div>
<div class="t r" style="left:863.40px;width:49.40px;top:247.30px">117.929 W</div>
<div class="t r" style="left:917.40px;width:49.40px;top:247.30px">63.049 W</div>
<div class="hg" style="left:667.60px;width:320px;top:267px"></div>
<svg class="ic" style="left:670.20px;top:258.20px" width="9" height="9" viewBox="0 0 9 9"><circle cx="4.5" cy="4.4" r="3.5" fill="#f0f0f0" stroke="#555" stroke-width="1.15"/><path d="M3.2 4.1h2.2" stroke="#8a8a8a" stroke-width="0.9"/></svg>
<div class="t nm" style="left:681.10px;top:258.80px">GPU Clock</div>
<div class="t r" style="left:755.40px;width:49.40px;top:258.80px">1,442.5 MHz</div>
<div class="t r" style="left:809.40px;width:49.40px;top:258.80px">1,442.5 MHz</div>
<div class="t r" style="left:863.40px;width:49.40px;top:258.80px">1,974.0 MHz</div>
<div class="t r" style="left:917.40px;width:49.40px;top:258.80px">1,577.0 MHz</div>
<div class="hg" style="left:667.60px;width:320px;top:279px"></div>
<svg class="ic" style="left:670.20px;top:269.70px" width="9" height="9" viewBox="0 0 9 9"><circle cx="4.5" cy="4.4" r="3.5" fill="#f0f0f0" stroke="#555" stroke-width="1.15"/><path d="M3.2 4.1h2.2" stroke="#8a8a8a" stroke-width="0.9"/></svg>
<div class="t nm" style="left:681.10px;top:270.30px">GPU Memory Clock</div>
<div class="t r" style="left:755.40px;width:49.40px;top:270.30px">2,304.0 MHz</div>
<div class="t r" style="left:809.40px;width:49.40px;top:270.30px">2,304.0 MHz</div>
<div class="t r" style="left:863.40px;width:49.40px;top:270.30px">2,304.0 MHz</div>
<div class="t r" style="left:917.40px;width:49.40px;top:270.30px">2,304.0 MHz</div>
<div class="hg" style="left:667.60px;width:320px;top:290px"></div>
<svg class="ic" style="left:670.20px;top:281.20px" width="9" height="9" viewBox="0 0 9 9"><circle cx="4.5" cy="4.4" r="3.5" fill="#f0f0f0" stroke="#555" stroke-width="1.15"/><path d="M3.2 4.1h2.2" stroke="#8a8a8a" stroke-width="0.9"/></svg>
<div class="t nm" style="left:681.10px;top:281.80px">GPU Video Clock</div>
<div class="t r" style="left:755.40px;width:49.40px;top:281.80px">1,303.5 MHz</div>
<div class="t r" style="left:809.40px;width:49.40px;top:281.80px">1,303.5 MHz</div>
<div class="t r" style="left:863.40px;width:49.40px;top:281.80px">1,771.5 MHz</div>
<div class="t r" style="left:917.40px;width:49.40px;top:281.80px">1,420.7 MHz</div>
<div class="hg" style="left:667.60px;width:320px;top:302px"></div>
<svg class="ic" style="left:670.20px;top:292.70px" width="9" height="9" viewBox="0 0 9 9"><circle cx="4.5" cy="4.4" r="3.5" fill="#f0f0f0" stroke="#555" stroke-width="1.15"/><path d="M3.2 4.1h2.2" stroke="#8a8a8a" stroke-width="0.9"/></svg>
<div class="t nm" style="left:681.10px;top:293.30px">GPU Core Load</div>
<div class="t r" style="left:755.40px;width:49.40px;top:293.30px">0.0 %</div>
<div class="t r" style="left:809.40px;width:49.40px;top:293.30px">0.0 %</div>
<div class="t r" style="left:863.40px;width:49.40px;top:293.30px">99.0 %</div>
<div class="t r" style="left:917.40px;width:49.40px;top:293.30px">34.2 %</div>
<div class="hg" style="left:667.60px;width:320px;top:313px"></div>
<svg class="ic" style="left:670.20px;top:304.20px" width="9" height="9" viewBox="0 0 9 9"><circle cx="4.5" cy="4.4" r="3.5" fill="#f0f0f0" stroke="#555" stroke-width="1.15"/><path d="M3.2 4.1h2.2" stroke="#8a8a8a" stroke-width="0.9"/></svg>
<div class="t nm" style="left:681.10px;top:304.80px">GPU Memory Contr<span class="el">...</span></div>
<div class="t r" style="left:755.40px;width:49.40px;top:304.80px">0.0 %</div>
<div class="t r" style="left:809.40px;width:49.40px;top:304.80px">0.0 %</div>
<div class="t r" style="left:863.40px;width:49.40px;top:304.80px">57.0 %</div>
<div class="t r" style="left:917.40px;width:49.40px;top:304.80px">16.2 %</div>
<div class="hg" style="left:667.60px;width:320px;top:325px"></div>
<svg class="ic" style="left:670.20px;top:315.70px" width="9" height="9" viewBox="0 0 9 9"><circle cx="4.5" cy="4.4" r="3.5" fill="#f0f0f0" stroke="#555" stroke-width="1.15"/><path d="M3.2 4.1h2.2" stroke="#8a8a8a" stroke-width="0.9"/></svg>
<div class="t nm" style="left:681.10px;top:316.30px">GPU Video Engine L<span class="el">...</span></div>
<div class="t r" style="left:755.40px;width:49.40px;top:316.30px">0.0 %</div>
<div class="t r" style="left:809.40px;width:49.40px;top:316.30px">0.0 %</div>
<div class="t r" style="left:863.40px;width:49.40px;top:316.30px">0.0 %</div>
<div class="t r" style="left:917.40px;width:49.40px;top:316.30px">0.0 %</div>
<div class="hg" style="left:667.60px;width:320px;top:336px"></div>
<svg class="ic" style="left:670.20px;top:327.20px" width="9" height="9" viewBox="0 0 9 9"><circle cx="4.5" cy="4.4" r="3.5" fill="#f0f0f0" stroke="#555" stroke-width="1.15"/><path d="M3.2 4.1h2.2" stroke="#8a8a8a" stroke-width="0.9"/></svg>
<div class="t nm" style="left:681.10px;top:327.80px">GPU Bus Load</div>
<div class="t r" style="left:755.40px;width:49.40px;top:327.80px">0.0 %</div>
<div class="t r" style="left:809.40px;width:49.40px;top:327.80px">0.0 %</div>
<div class="t r" style="left:863.40px;width:49.40px;top:327.80px">8.0 %</div>
<div class="t r" style="left:917.40px;width:49.40px;top:327.80px">0.8 %</div>
<div class="hg" style="left:667.60px;width:320px;top:348px"></div>
<svg class="ic" style="left:670.20px;top:338.70px" width="9" height="9" viewBox="0 0 9 9"><circle cx="4.5" cy="4.4" r="3.5" fill="#f0f0f0" stroke="#555" stroke-width="1.15"/><path d="M3.2 4.1h2.2" stroke="#8a8a8a" stroke-width="0.9"/></svg>
<div class="t nm" style="left:681.10px;top:339.30px">GPU Memory Usage</div>
<div class="t r" style="left:755.40px;width:49.40px;top:339.30px">6.9 %</div>
<div class="t r" style="left:809.40px;width:49.40px;top:339.30px">6.6 %</div>
<div class="t r" style="left:863.40px;width:49.40px;top:339.30px">18.0 %</div>
<div class="t r" style="left:917.40px;width:49.40px;top:339.30px">11.0 %</div>
<div class="hg" style="left:667.60px;width:320px;top:359px"></div>
<svg class="ic" style="left:670.20px;top:350.20px" width="9" height="9" viewBox="0 0 9 9"><circle cx="4.5" cy="4.4" r="3.5" fill="#f0f0f0" stroke="#555" stroke-width="1.15"/><path d="M3.2 4.1h2.2" stroke="#8a8a8a" stroke-width="0.9"/></svg>
<div class="t nm" style="left:681.10px;top:350.80px">GPU D3D Usage</div>
<div class="t r" style="left:755.40px;width:49.40px;top:350.80px">0.1 %</div>
<div class="t r" style="left:809.40px;width:49.40px;top:350.80px">0.0 %</div>
<div class="t r" style="left:863.40px;width:49.40px;top:350.80px">100.0 %</div>
<div class="t r" style="left:917.40px;width:49.40px;top:350.80px">35.1 %</div>
<div class="hg" style="left:667.60px;width:320px;top:371px"></div>
<svg class="ic" style="left:670.20px;top:361.70px" width="9" height="9" viewBox="0 0 9 9"><circle cx="4.5" cy="4.4" r="3.5" fill="#f0f0f0" stroke="#555" stroke-width="1.15"/><path d="M3.2 4.1h2.2" stroke="#8a8a8a" stroke-width="0.9"/></svg>
<div class="t nm" style="left:681.10px;top:362.30px">GPU Memory Alloca<span class="el">...</span></div>
<div class="t r" style="left:755.40px;width:49.40px;top:362.30px">567 MB</div>
<div class="t r" style="left:809.40px;width:49.40px;top:362.30px">539 MB</div>
<div class="t r" style="left:863.40px;width:49.40px;top:362.30px">1,476 MB</div>
<div class="t r" style="left:917.40px;width:49.40px;top:362.30px">902 MB</div>
<div class="hg" style="left:667.60px;width:320px;top:382px"></div>
<svg class="ic" style="left:670.20px;top:373.20px" width="9" height="9" viewBox="0 0 9 9"><circle cx="4.5" cy="4.4" r="3.5" fill="#f0f0f0" stroke="#555" stroke-width="1.15"/><path d="M3.2 4.1h2.2" stroke="#8a8a8a" stroke-width="0.9"/></svg>
<div class="t nm" style="left:681.10px;top:373.80px">GPU D3D Memory D<span class="el">...</span></div>
<div class="t r" style="left:755.40px;width:49.40px;top:373.80px">526 MB</div>
<div class="t r" style="left:809.40px;width:49.40px;top:373.80px">497 MB</div>
<div class="t r" style="left:863.40px;width:49.40px;top:373.80px">1,435 MB</div>
<div class="t r" style="left:917.40px;width:49.40px;top:373.80px">862 MB</div>
<div class="hg" style="left:667.60px;width:320px;top:394px"></div>
<svg class="ic" style="left:670.20px;top:384.70px" width="9" height="9" viewBox="0 0 9 9"><circle cx="4.5" cy="4.4" r="3.5" fill="#f0f0f0" stroke="#555" stroke-width="1.15"/><path d="M3.2 4.1h2.2" stroke="#8a8a8a" stroke-width="0.9"/></svg>
<div class="t nm" style="left:681.10px;top:385.30px">GPU D3D Memory D<span class="el">...</span></div>
<div class="t r" style="left:755.40px;width:49.40px;top:385.30px">31 MB</div>
<div class="t r" style="left:809.40px;width:49.40px;top:385.30px">27 MB</div>
<div class="t r" style="left:863.40px;width:49.40px;top:385.30px">98 MB</div>
<div class="t r" style="left:917.40px;width:49.40px;top:385.30px">50 MB</div>
<div class="hg" style="left:667.60px;width:320px;top:405px"></div>
<svg class="ic" style="left:670.20px;top:396.20px" width="9" height="9" viewBox="0 0 9 9"><circle cx="4.5" cy="4.4" r="3.5" fill="#f0f0f0" stroke="#555" stroke-width="1.15"/><path d="M3.2 4.1h2.2" stroke="#8a8a8a" stroke-width="0.9"/></svg>
<div class="t nm" style="left:681.10px;top:396.80px">PCIe Link Speed</div>
<div class="t r" style="left:755.40px;width:49.40px;top:396.80px">8.0 GT/s</div>
<div class="t r" style="left:809.40px;width:49.40px;top:396.80px">8.0 GT/s</div>
<div class="t r" style="left:863.40px;width:49.40px;top:396.80px">8.0 GT/s</div>
<div class="t r" style="left:917.40px;width:49.40px;top:396.80px">8.0 GT/s</div>
<div class="hg" style="left:667.60px;width:320px;top:417px"></div>
<div class="hg" style="left:667.60px;width:320px;top:428px"></div>
<svg class="ic" style="left:670.60px;top:419.00px" width="8" height="9" viewBox="0 0 8 9"><rect x="1" y="0.3" width="6" height="8.4" fill="#4a4a4a"/><rect x="2" y="0.3" width="1.5" height="8.4" fill="#6a6a6a"/><path d="M0.2 1.5h1M0.2 3.2h1M0.2 4.9h1M0.2 6.6h1M6.8 1.5h1M6.8 3.2h1M6.8 4.9h1M6.8 6.6h1" stroke="#777" stroke-width="0.7"/></svg>
<div class="t nm it" style="left:681.10px;top:419.80px">Battery: COMPAL <span class="el">...</span></div>
<div class="hg" style="left:667.60px;width:320px;top:440px"></div>
<svg class="ic" style="left:671.10px;top:429.70px" width="7" height="10" viewBox="0 0 7 10"><path d="M1.6 0.4H5.6L4.1 3.6H5.7L1.4 9.7L2.5 5.3H0.9Z" fill="#f6d84a" stroke="#c98a1e" stroke-width="0.7" stroke-linejoin="round"/><path d="M2.3 1.2L1.8 4.6" stroke="#fff6b0" stroke-width="0.6"/></svg>
<div class="t nm" style="left:681.10px;top:431.30px">Battery Voltage</div>
<div class="t r" style="left:755.40px;width:49.40px;top:431.30px">12.793 V</div>
<div class="t r" style="left:809.40px;width:49.40px;top:431.30px">12.744 V</div>
<div class="t r" style="left:863.40px;width:49.40px;top:431.30px">12.802 V</div>
<div class="t r" style="left:917.40px;width:49.40px;top:431.30px">12.789 V</div>
<div class="hg" style="left:667.60px;width:320px;top:451px"></div>
<svg class="ic" style="left:670.20px;top:442.20px" width="9" height="9" viewBox="0 0 9 9"><circle cx="4.5" cy="4.4" r="3.5" fill="#f0f0f0" stroke="#555" stroke-width="1.15"/><path d="M3.2 4.1h2.2" stroke="#8a8a8a" stroke-width="0.9"/></svg>
<div class="t nm" style="left:681.10px;top:442.80px">Remaining Capacity</div>
<div class="t r" style="left:755.40px;width:49.40px;top:442.80px">94.050 Wh</div>
<div class="t r" style="left:809.40px;width:49.40px;top:442.80px">94.050 Wh</div>
<div class="t r" style="left:863.40px;width:49.40px;top:442.80px">94.050 Wh</div>
<div class="t r" style="left:917.40px;width:49.40px;top:442.80px">94.050 Wh</div>
<div class="hg" style="left:667.60px;width:320px;top:463px"></div>
<svg class="ic" style="left:670.20px;top:453.70px" width="9" height="9" viewBox="0 0 9 9"><circle cx="4.5" cy="4.4" r="3.5" fill="#f0f0f0" stroke="#555" stroke-width="1.15"/><path d="M3.2 4.1h2.2" stroke="#8a8a8a" stroke-width="0.9"/></svg>
<div class="t nm" style="left:681.10px;top:454.30px">Charge Level</div>
<div class="t r" style="left:755.40px;width:49.40px;top:454.30px">100.0 %</div>
<div class="t r" style="left:809.40px;width:49.40px;top:454.30px">100.0 %</div>
<div class="t r" style="left:863.40px;width:49.40px;top:454.30px">100.0 %</div>
<div class="t r" style="left:917.40px;width:49.40px;top:454.30px">100.0 %</div>
<div class="hg" style="left:667.60px;width:320px;top:474px"></div>
<svg class="ic" style="left:670.20px;top:465.20px" width="9" height="9" viewBox="0 0 9 9"><circle cx="4.5" cy="4.4" r="3.5" fill="#f0f0f0" stroke="#555" stroke-width="1.15"/><path d="M3.2 4.1h2.2" stroke="#8a8a8a" stroke-width="0.9"/></svg>
<div class="t nm" style="left:681.10px;top:465.80px">Charge Rate</div>
<div class="t r" style="left:755.40px;width:49.40px;top:465.80px">0.000 W</div>
<div class="t r" style="left:809.40px;width:49.40px;top:465.80px">0.000 W</div>
<div class="t r" style="left:863.40px;width:49.40px;top:465.80px">0.000 W</div>
<div class="t r" style="left:917.40px;width:49.40px;top:465.80px">0.000 W</div>
<div class="hg" style="left:667.60px;width:320px;top:486px"></div>
<div class="hg" style="left:667.60px;width:320px;top:497px"></div>
<svg class="ic" style="left:670.60px;top:488.00px" width="8" height="9" viewBox="0 0 8 9"><rect x="1" y="0.3" width="6" height="8.4" fill="#4a4a4a"/><rect x="2" y="0.3" width="1.5" height="8.4" fill="#6a6a6a"/><path d="M0.2 1.5h1M0.2 3.2h1M0.2 4.9h1M0.2 6.6h1M6.8 1.5h1M6.8 3.2h1M6.8 4.9h1M6.8 6.6h1" stroke="#777" stroke-width="0.7"/></svg>
<div class="t nm it" style="left:681.10px;top:488.80px">Network: Qualcom<span class="el">...</span></div>
<div class="hg" style="left:667.60px;width:320px;top:509px"></div>
<svg class="ic" style="left:670.20px;top:499.70px" width="9" height="9" viewBox="0 0 9 9"><circle cx="4.5" cy="4.4" r="3.5" fill="#f0f0f0" stroke="#555" stroke-width="1.15"/><path d="M3.2 4.1h2.2" stroke="#8a8a8a" stroke-width="0.9"/></svg>
<div class="t nm" style="left:681.10px;top:500.30px">Total DL</div>
<div class="t r" style="left:755.40px;width:49.40px;top:500.30px">0 MB</div>
<div class="t r" style="left:809.40px;width:49.40px;top:500.30px">0 MB</div>
<div class="t r" style="left:863.40px;width:49.40px;top:500.30px">0 MB</div>
<div class="hg" style="left:667.60px;width:320px;top:520px"></div>
<svg class="ic" style="left:670.20px;top:511.20px" width="9" height="9" viewBox="0 0 9 9"><circle cx="4.5" cy="4.4" r="3.5" fill="#f0f0f0" stroke="#555" stroke-width="1.15"/><path d="M3.2 4.1h2.2" stroke="#8a8a8a" stroke-width="0.9"/></svg>
<div class="t nm" style="left:681.10px;top:511.80px">Total UP</div>
<div class="t r" style="left:755.40px;width:49.40px;top:511.80px">0 MB</div>
<div class="t r" style="left:809.40px;width:49.40px;top:511.80px">0 MB</div>
<div class="t r" style="left:863.40px;width:49.40px;top:511.80px">0 MB</div>
<div class="hg" style="left:667.60px;width:320px;top:532px"></div>
<div class="hg" style="left:667.60px;width:320px;top:543px"></div>
<svg class="ic" style="left:670.60px;top:534.00px" width="8" height="9" viewBox="0 0 8 9"><rect x="1" y="0.3" width="6" height="8.4" fill="#4a4a4a"/><rect x="2" y="0.3" width="1.5" height="8.4" fill="#6a6a6a"/><path d="M0.2 1.5h1M0.2 3.2h1M0.2 4.9h1M0.2 6.6h1M6.8 1.5h1M6.8 3.2h1M6.8 4.9h1M6.8 6.6h1" stroke="#777" stroke-width="0.7"/></svg>
<div class="t nm it" style="left:681.10px;top:534.80px">Network: Killer Wire<span class="el">...</span></div>
<div class="hg" style="left:667.60px;width:320px;top:555px"></div>
<svg class="ic" style="left:670.20px;top:545.70px" width="9" height="9" viewBox="0 0 9 9"><circle cx="4.5" cy="4.4" r="3.5" fill="#f0f0f0" stroke="#555" stroke-width="1.15"/><path d="M3.2 4.1h2.2" stroke="#8a8a8a" stroke-width="0.9"/></svg>
<div class="t nm" style="left:681.10px;top:546.30px">Total DL</div>
<div class="t r" style="left:755.40px;width:49.40px;top:546.30px">2,976 MB</div>
<div class="t r" style="left:809.40px;width:49.40px;top:546.30px">2,975 MB</div>
<div class="t r" style="left:863.40px;width:49.40px;top:546.30px">2,976 MB</div>
<div class="hg" style="left:667.60px;width:320px;top:566px"></div>
<svg class="ic" style="left:670.20px;top:557.20px" width="9" height="9" viewBox="0 0 9 9"><circle cx="4.5" cy="4.4" r="3.5" fill="#f0f0f0" stroke="#555" stroke-width="1.15"/><path d="M3.2 4.1h2.2" stroke="#8a8a8a" stroke-width="0.9"/></svg>
<div class="t nm" style="left:681.10px;top:557.80px">Total UP</div>
<div class="t r" style="left:755.40px;width:49.40px;top:557.80px">1,189 MB</div>
<div class="t r" style="left:809.40px;width:49.40px;top:557.80px">1,189 MB</div>
<div class="t r" style="left:863.40px;width:49.40px;top:557.80px">1,189 MB</div>
<div class="hg" style="left:667.60px;width:320px;top:578px"></div>
<svg class="ic" style="left:670.20px;top:568.70px" width="9" height="9" viewBox="0 0 9 9"><circle cx="4.5" cy="4.4" r="3.5" fill="#f0f0f0" stroke="#555" stroke-width="1.15"/><path d="M3.2 4.1h2.2" stroke="#8a8a8a" stroke-width="0.9"/></svg>
<div class="t nm" style="left:681.10px;top:569.30px">Current DL rate</div>
<div class="t r" style="left:755.40px;width:49.40px;top:569.30px">0.000 KB/s</div>
<div class="t r" style="left:809.40px;width:49.40px;top:569.30px">0.000 KB/s</div>
<div class="t r" style="left:863.40px;width:49.40px;top:569.30px">11.741 KB/s</div>
<div class="t r" style="left:917.40px;width:49.40px;top:569.30px">0.542 KB/s</div>
<div class="hg" style="left:667.60px;width:320px;top:589px"></div>
<svg class="ic" style="left:670.20px;top:580.20px" width="9" height="9" viewBox="0 0 9 9"><circle cx="4.5" cy="4.4" r="3.5" fill="#f0f0f0" stroke="#555" stroke-width="1.15"/><path d="M3.2 4.1h2.2" stroke="#8a8a8a" stroke-width="0.9"/></svg>
<div class="t nm" style="left:681.10px;top:580.80px">Current UP rate</div>
<div class="t r" style="left:755.40px;width:49.40px;top:580.80px">0.202 KB/s</div>
<div class="t r" style="left:809.40px;width:49.40px;top:580.80px">0.000 KB/s</div>
<div class="t r" style="left:863.40px;width:49.40px;top:580.80px">182.216 KB/s</div>
<div class="t r" style="left:917.40px;width:49.40px;top:580.80px">1.705 KB/s</div>
<div class="hg" style="left:667.60px;width:320px;top:601px"></div>
<div class="hg" style="left:667.60px;width:320px;top:612px"></div>
<svg class="ic" style="left:670.60px;top:603.00px" width="8" height="9" viewBox="0 0 8 9"><rect x="1" y="0.3" width="6" height="8.4" fill="#4a4a4a"/><rect x="2" y="0.3" width="1.5" height="8.4" fill="#6a6a6a"/><path d="M0.2 1.5h1M0.2 3.2h1M0.2 4.9h1M0.2 6.6h1M6.8 1.5h1M6.8 3.2h1M6.8 4.9h1M6.8 6.6h1" stroke="#777" stroke-width="0.7"/></svg>
<div class="t nm it" style="left:681.10px;top:603.80px">Windows Hardware<span class="el">...</span></div>
<div class="hg" style="left:667.60px;width:320px;top:624px"></div>
<svg class="ic" style="left:670.20px;top:614.70px" width="9" height="9" viewBox="0 0 9 9"><circle cx="4.5" cy="4.4" r="3.5" fill="#f0f0f0" stroke="#555" stroke-width="1.15"/><path d="M3.2 4.1h2.2" stroke="#8a8a8a" stroke-width="0.9"/></svg>
<div class="t nm" style="left:681.10px;top:615.30px">Total Errors</div>
<div class="t r" style="left:755.40px;width:49.40px;top:615.30px">0</div>
<div class="t r" style="left:809.40px;width:49.40px;top:615.30px">0</div>
<div class="t r" style="left:863.40px;width:49.40px;top:615.30px">0</div>
<div class="hg" style="left:667.60px;width:320px;top:635px"></div>
<div style="position:absolute;left:986px;top:22px;width:11px;height:609px;background:#f0f0f0"></div>
<div style="position:absolute;left:986.5px;top:360px;width:9.5px;height:259px;background:#cdcdcd"></div>
<svg style="position:absolute;left:988px;top:25px" width="8" height="6" viewBox="0 0 8 6"><path d="M1 4.5L4 1.5L7 4.5" fill="none" stroke="#606060" stroke-width="1.1"/></svg>
<svg style="position:absolute;left:988px;top:622px" width="8" height="6" viewBox="0 0 8 6"><path d="M1 1.5L4 4.5L7 1.5" fill="none" stroke="#606060" stroke-width="1.1"/></svg>
<div style="position:absolute;left:1px;top:21px;width:997px;height:1px;background:#a0a0a0"></div>
<div style="position:absolute;left:1px;top:631px;width:997px;height:1px;background:#a0a0a0"></div>
<div style="position:absolute;left:332px;top:21px;width:1px;height:611px;background:#b4b4b4"></div>
<div style="position:absolute;left:333px;top:21px;width:1px;height:611px;background:#7a7a7a"></div>
<div style="position:absolute;left:665px;top:21px;width:1px;height:611px;background:#5c5c5c"></div>
<div style="position:absolute;left:997px;top:21px;width:1px;height:611px;background:#a0a0a0"></div>
<div style="position:absolute;left:0;top:632px;width:1000px;height:34px;background:#f0f0f0"></div>
<div style="position:absolute;left:2px;top:636px;width:27.5px;height:24px;background:#e1e1e1;border:1px solid #b5b5b5"><svg style="position:absolute;left:2px;top:7px" width="22" height="10" viewBox="0 0 22 10"><g transform="translate(0.8,0)"><path d="M0.3 4.5L4.6 0.4V2.6H8.8V6.4H4.6V8.6Z" fill="#2f8ee0" stroke="#bfe0ff" stroke-width="0.4"/></g><g transform="translate(12.3,0)"><path d="M9 4.5L4.7 0.4V2.6H0.5V6.4H4.7V8.6Z" fill="#2f8ee0" stroke="#bfe0ff" stroke-width="0.4"/></g></svg></div>
<div style="position:absolute;left:31px;top:636px;width:28px;height:24px;background:#e1e1e1;border:1px solid #b5b5b5"><svg style="position:absolute;left:2px;top:7px" width="22" height="10" viewBox="0 0 22 10"><g transform="translate(1,0)"><path d="M9 4.5L4.7 0.4V2.6H0.5V6.4H4.7V8.6Z" fill="#2f8ee0" stroke="#bfe0ff" stroke-width="0.4"/></g><g transform="translate(12,0)"><path d="M0.3 4.5L4.6 0.4V2.6H8.8V6.4H4.6V8.6Z" fill="#2f8ee0" stroke="#bfe0ff" stroke-width="0.4"/></g></svg></div>
<svg style="position:absolute;left:738.6px;top:640.8px" width="14" height="14" viewBox="0 0 14 14"><rect x="0" y="0" width="14" height="14" fill="#1c1c1c"/><path d="M9.36 5.90L12.90 5.89M9.44 7.89L11.96 10.38M8.10 9.36L8.11 12.90M6.11 9.44L3.62 11.96M4.64 8.10L1.10 8.11M4.56 6.11L2.04 3.62M5.90 4.64L5.89 1.10M7.89 4.56L10.38 2.04" stroke="#d6d6d6" stroke-width="1.5" stroke-linecap="round"/><circle cx="7" cy="7" r="2.1" fill="#d8c4cc" stroke="#333" stroke-width="0.6"/></svg>
<div style="position:absolute;left:800px;top:636px;width:28px;height:24px;background:#e1e1e1;border:1px solid #b5b5b5"></div>
<svg style="position:absolute;left:802px;top:636px" width="26" height="24" viewBox="0 0 26 24"><defs><linearGradient id="mg" x1="0" y1="0" x2="1" y2="1"><stop offset="0" stop-color="#7cc4f4"/><stop offset="0.45" stop-color="#2a7fd4"/><stop offset="1" stop-color="#0c4f9c"/></linearGradient></defs><path d="M13 5.5H20V12" fill="none" stroke="#8a8a8a" stroke-width="1"/><path d="M3 2.2L13.2 3.6L12.4 11.4L2.2 10Z" fill="url(#mg)" stroke="#1d3f66" stroke-width="0.6"/><path d="M5 11.2L9.5 11.8L9 13.2L4.6 12.6Z" fill="#777"/><path d="M12.2 12.2L22.6 13.4L21.8 21.2L11.4 20Z" fill="url(#mg)" stroke="#1d3f66" stroke-width="0.6"/><path d="M14.6 21.1L19 21.7L18.6 23L14.2 22.5Z" fill="#777"/></svg>
<div class="t" style="left:840px;top:642px;font-size:8.6px;letter-spacing:0;line-height:11px;color:#111;transform:scaleX(0.92)">0:04:34</div>
<div style="position:absolute;left:871px;top:636px;width:28px;height:24px;background:#e1e1e1;border:1px solid #b5b5b5"></div>
<svg style="position:absolute;left:873.8px;top:637.3px" width="22" height="22" viewBox="0 0 22 22"><circle cx="11" cy="11" r="10.6" fill="#fff" stroke="#5a5a5a" stroke-width="0.9"/><path d="M11.00 2.70L11.00 0.80M15.15 3.81L16.10 2.17M18.19 6.85L19.83 5.90M19.30 11.00L21.20 11.00M18.19 15.15L19.83 16.10M15.15 18.19L16.10 19.83M11.00 19.30L11.00 21.20M6.85 18.19L5.90 19.83M3.81 15.15L2.17 16.10M2.70 11.00L0.80 11.00M3.81 6.85L2.17 5.90M6.85 3.81L5.90 2.17" stroke="#3a3a3a" stroke-width="1.2"/><path d="M11 11L10.4 3.2" stroke="#222" stroke-width="1.2"/><path d="M10.4 11H16" stroke="#000" stroke-width="1.7"/></svg>
<div style="position:absolute;left:901.5px;top:636px;width:28px;height:24px;background:#e1e1e1;border:1px solid #b5b5b5"></div>
<svg style="position:absolute;left:906px;top:637px" width="22" height="22" viewBox="0 0 22 22"><path d="M2.5 2.2H14L17.6 5.8V19.2H2.5Z" fill="#cfcfcf" opacity="0.6"/><path d="M3.3 1.6H13.6L17.2 5.2V18.6H3.3Z" fill="#fafafa" stroke="#d4d4d4" stroke-width="0.6"/><path d="M13.6 1.6V5.2H17.2" fill="#fff" stroke="#c8c8c8" stroke-width="0.6"/><path d="M6.5 3.5V17M9.5 3.5V17" stroke="#e4e4e4" stroke-width="1.2"/><path d="M15.8 13.2V7.2" stroke="#e0e0e0" stroke-width="1"/><path d="M15.6 12.6V20.6M11.6 16.6H19.6" stroke="#9ccc5a" stroke-width="3.2"/></svg>
<div style="position:absolute;left:932px;top:636px;width:28px;height:24px;background:#e1e1e1;border:1px solid #b5b5b5"></div>
<svg style="position:absolute;left:935.3px;top:637.6px" width="22" height="22" viewBox="0 0 22 22"><defs><linearGradient id="gg" x1="0" y1="0" x2="1" y2="1"><stop offset="0" stop-color="#e6e6e6"/><stop offset="0.55" stop-color="#bdbdbd"/><stop offset="1" stop-color="#8a8a8a"/></linearGradient></defs><circle cx="11" cy="10.8" r="8.3" fill="none" stroke="url(#gg)" stroke-width="3.6" stroke-dasharray="3.4 3.12"/><circle cx="11" cy="10.8" r="6.6" fill="none" stroke="url(#gg)" stroke-width="3.4"/><circle cx="11" cy="10.8" r="4.5" fill="none" stroke="#8e8e8e" stroke-width="1"/><circle cx="11" cy="10.8" r="3.8" fill="#e2e2e2"/></svg>
<div style="position:absolute;left:964px;top:636px;width:28.5px;height:24px;background:#e6e6e6;border:2px solid #3a78b8"><div style="position:absolute;left:0;top:0;right:0;bottom:0;border:1px solid #f8fbff"></div></div>
<svg style="position:absolute;left:969.8px;top:640.2px" width="17" height="17" viewBox="0 0 17 17"><defs><linearGradient id="xg" x1="0" y1="0" x2="1" y2="1"><stop offset="0" stop-color="#2a74b0"/><stop offset="0.5" stop-color="#3d97d4"/><stop offset="1" stop-color="#5ab2e4"/></linearGradient></defs><path d="M3.6 3.6L13.4 13.4M13.4 3.6L3.6 13.4" stroke="url(#xg)" stroke-width="5" stroke-linecap="square"/></svg>
<div style="position:absolute;left:0;top:0;width:1px;height:668px;background:#4a7190"></div>
<div style="position:absolute;left:1px;top:1px;width:1px;height:666px;background:#dceefa;opacity:0.7"></div>
<div style="position:absolute;left:998px;top:1px;width:1px;height:666px;background:#d8f0ff"></div>
<div style="position:absolute;left:999px;top:0;width:1px;height:668px;background:#7199b5"></div>
<div style="position:absolute;left:0;top:0;width:1000px;height:1px;background:#7596a2"></div>
<div style="position:absolute;left:1px;top:1px;width:998px;height:1px;background:#f2ffff"></div>
<div style="position:absolute;left:1px;top:666px;width:998px;height:1px;background:#e2fdff"></div>
<div style="position:absolute;left:0;top:667px;width:1000px;height:1px;background:#6e96a5"></div>
</body></html>
